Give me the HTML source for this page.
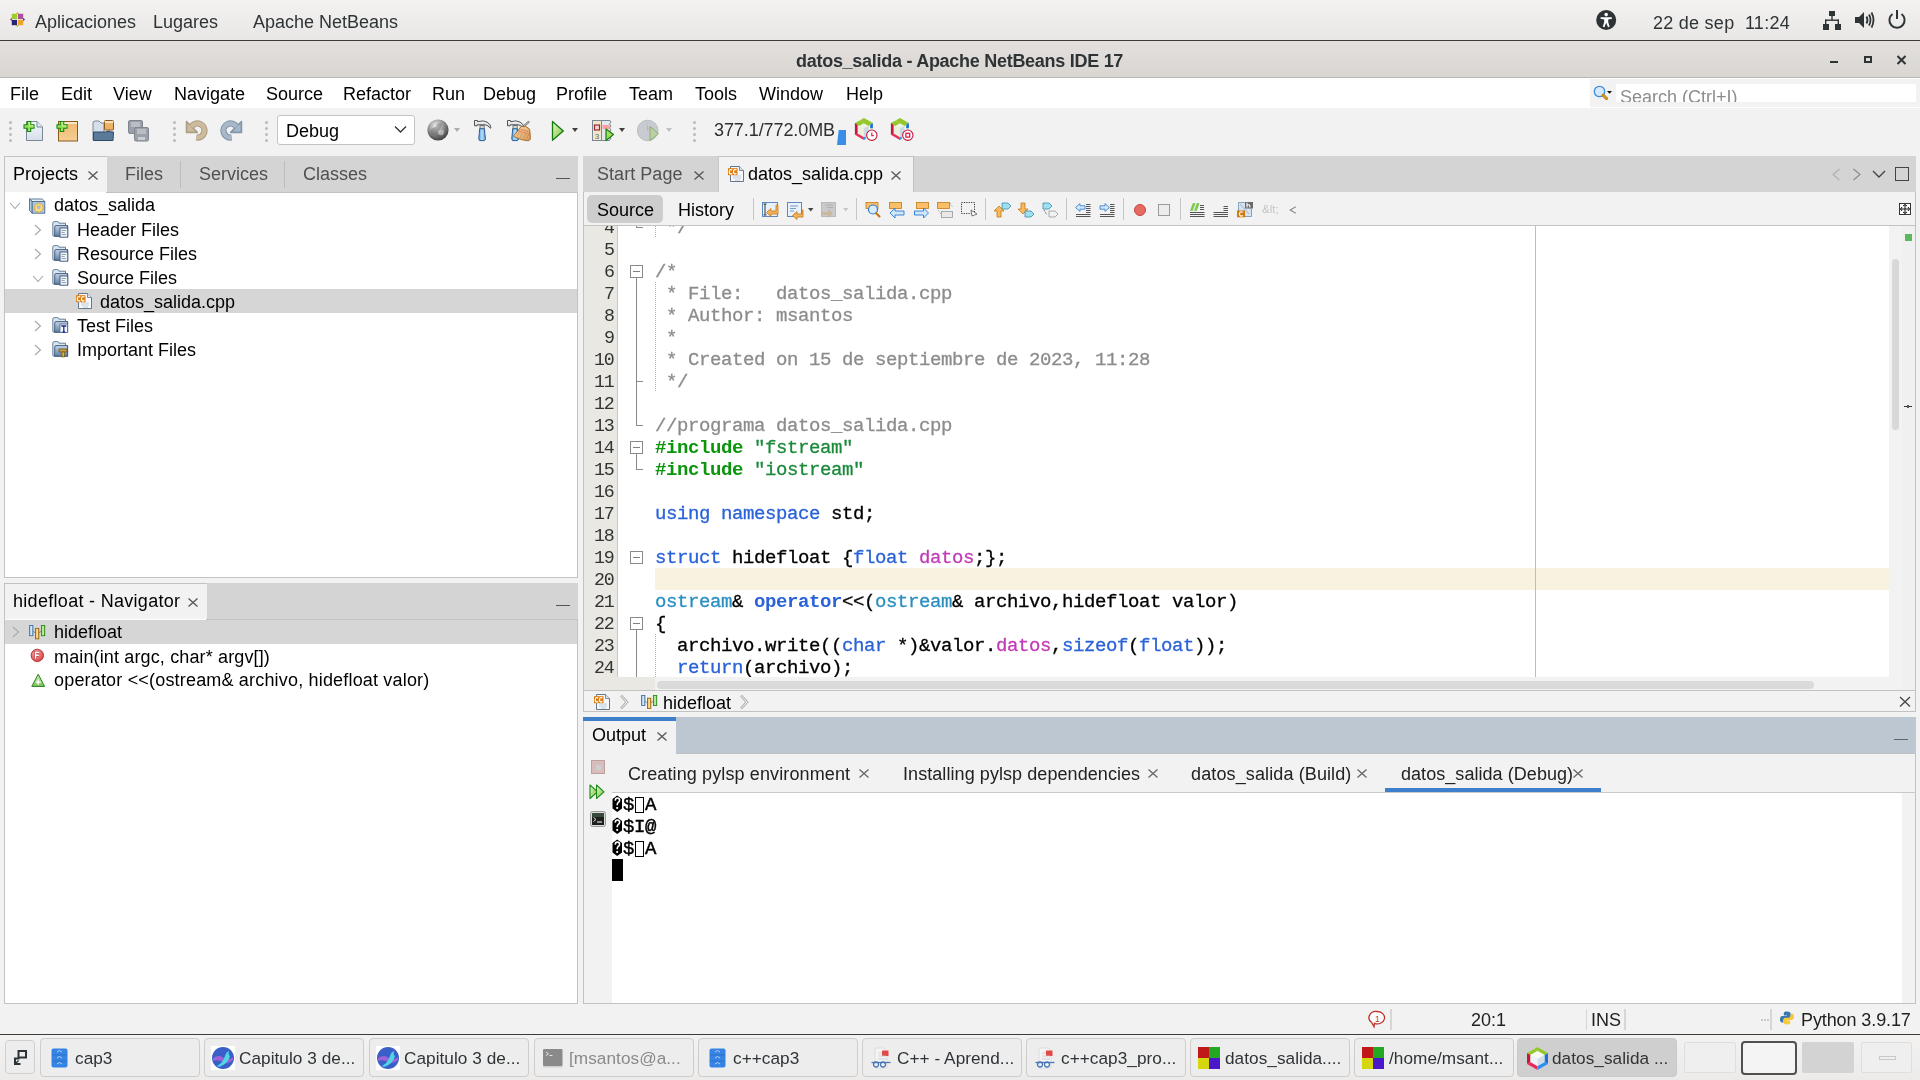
<!DOCTYPE html>
<html><head><meta charset="utf-8">
<style>
*{box-sizing:border-box;margin:0;padding:0}
html,body{width:1920px;height:1080px;overflow:hidden;background:#f2f2f2;font-family:"Liberation Sans",sans-serif;font-size:18px;color:#000}
.a{position:absolute}
.t{position:absolute;white-space:pre;will-change:transform}
svg.a{overflow:visible}
</style></head><body>
<div class="a" style="left:0px;top:0px;width:1920px;height:40px;background:linear-gradient(#f3f2f1,#e9e7e5)"></div>
<div class="a" style="left:0px;top:40px;width:1920px;height:1px;background:#3c3c3c"></div>
<svg class="a" style="left:9.5px;top:12.3px;" width="17" height="17" viewBox="0 0 17 17"><g transform="rotate(45 9.5 9.5)">
<rect x="3" y="3" width="13" height="13" fill="#fff" opacity="0"/>
</g>
<g transform="scale(0.88)"><polygon points="8.5,0 10.5,2 6.5,2" fill="#efa429"/>
<polygon points="17,8.5 15,10.5 15,6.5" fill="#262577"/>
<polygon points="8.5,17 6.5,15 10.5,15" fill="#9ccd2a"/>
<polygon points="0,8.5 2,6.5 2,10.5" fill="#932279"/>
<rect x="2" y="2" width="6" height="6" fill="#9ccd2a"/>
<rect x="9" y="2" width="6" height="6" fill="#b0509a"/>
<rect x="2" y="9" width="6" height="6" fill="#262577"/>
<rect x="9" y="9" width="6" height="6" fill="#efa429"/></g>
</svg>
<div class="t" style="left:35px;top:12.26px;font-size:18px;line-height:20px;color:#2e3436;font-family:'Liberation Sans',sans-serif;">Aplicaciones</div>
<div class="t" style="left:153px;top:12.26px;font-size:18px;line-height:20px;color:#2e3436;font-family:'Liberation Sans',sans-serif;">Lugares</div>
<div class="t" style="left:253px;top:12.26px;font-size:18px;line-height:20px;color:#2e3436;font-family:'Liberation Sans',sans-serif;">Apache NetBeans</div>
<svg class="a" style="left:1596px;top:10px;" width="21" height="21" viewBox="0 0 21 21"><circle cx="10.2" cy="10" r="10" fill="#2e3436"/>
<circle cx="10.2" cy="4.6" r="1.8" fill="#fff"/>
<path d="M4.5 7.2 L15.9 7.2 L15.9 8.8 L12.2 9.4 L12.2 12 L13.6 16.8 L12 17.2 L10.2 12.8 L8.4 17.2 L6.8 16.8 L8.2 12 L8.2 9.4 L4.5 8.8 Z" fill="#fff"/></svg>
<div class="t" style="left:1653px;top:12.56px;font-size:18px;line-height:20px;color:#2e3436;font-family:'Liberation Sans',sans-serif;letter-spacing:0.26px;">22 de sep  11:24</div>
<svg class="a" style="left:1822px;top:10px;" width="21" height="21" viewBox="0 0 21 21"><rect x="7" y="1" width="6" height="5" fill="#2e3436"/>
<rect x="9.3" y="6" width="1.4" height="4" fill="#2e3436"/>
<rect x="3" y="9.5" width="14" height="1.4" fill="#2e3436"/>
<rect x="3" y="9.5" width="1.4" height="5" fill="#2e3436"/>
<rect x="15.6" y="9.5" width="1.4" height="5" fill="#2e3436"/>
<rect x="1" y="14" width="6" height="6" fill="#2e3436"/>
<rect x="13" y="14" width="6" height="6" fill="#2e3436"/></svg>
<svg class="a" style="left:1854px;top:10px;" width="21" height="21" viewBox="0 0 21 21"><path d="M1 7 L5 7 L10 2 L10 18 L5 13 L1 13 Z" fill="#2e3436"/>
<path d="M12.5 6.5 Q14.5 10 12.5 13.5" stroke="#2e3436" stroke-width="1.8" fill="none"/>
<path d="M15 4.5 Q18 10 15 15.5" stroke="#2e3436" stroke-width="1.8" fill="none"/>
<path d="M17.5 2.5 Q21.5 10 17.5 17.5" stroke="#2e3436" stroke-width="1.8" fill="none"/></svg>
<svg class="a" style="left:1887px;top:9px;" width="21" height="21" viewBox="0 0 21 21"><path d="M5.5 5 A7.6 7.6 0 1 0 14.5 5" stroke="#2e3436" stroke-width="2" fill="none"/>
<rect x="9" y="1" width="2" height="9" fill="#2e3436"/></svg>
<div class="a" style="left:0px;top:41px;width:1920px;height:37px;background:linear-gradient(#e3e0dd,#d9d6d2)"></div>
<div class="a" style="left:0px;top:77px;width:1920px;height:1px;background:#bcb8b3"></div>
<div class="t" style="left:796px;top:50.96px;font-size:18px;line-height:20px;color:#2e3436;font-family:'Liberation Sans',sans-serif;font-weight:bold;letter-spacing:-0.28px;">datos_salida - Apache NetBeans IDE 17</div>
<div class="a" style="left:1830px;top:61px;width:8px;height:2px;background:#2e3436"></div>
<div class="a" style="left:1864px;top:56px;width:7.5px;height:6.5px;border:2px solid #2e3436"></div>
<svg class="a" style="left:1896px;top:55px;" width="11" height="10" viewBox="0 0 11 10"><path d="M1.5 1 L9.5 9 M9.5 1 L1.5 9" stroke="#2e3436" stroke-width="2"/></svg>
<div class="a" style="left:0px;top:78px;width:1920px;height:30px;background:#fff"></div>
<div class="t" style="left:10px;top:84.26px;font-size:18px;line-height:20px;color:#000;font-family:'Liberation Sans',sans-serif;">File</div>
<div class="t" style="left:61px;top:84.26px;font-size:18px;line-height:20px;color:#000;font-family:'Liberation Sans',sans-serif;">Edit</div>
<div class="t" style="left:113px;top:84.26px;font-size:18px;line-height:20px;color:#000;font-family:'Liberation Sans',sans-serif;">View</div>
<div class="t" style="left:173.5px;top:84.26px;font-size:18px;line-height:20px;color:#000;font-family:'Liberation Sans',sans-serif;">Navigate</div>
<div class="t" style="left:266px;top:84.26px;font-size:18px;line-height:20px;color:#000;font-family:'Liberation Sans',sans-serif;">Source</div>
<div class="t" style="left:343px;top:84.26px;font-size:18px;line-height:20px;color:#000;font-family:'Liberation Sans',sans-serif;">Refactor</div>
<div class="t" style="left:432px;top:84.26px;font-size:18px;line-height:20px;color:#000;font-family:'Liberation Sans',sans-serif;">Run</div>
<div class="t" style="left:483px;top:84.26px;font-size:18px;line-height:20px;color:#000;font-family:'Liberation Sans',sans-serif;">Debug</div>
<div class="t" style="left:556px;top:84.26px;font-size:18px;line-height:20px;color:#000;font-family:'Liberation Sans',sans-serif;">Profile</div>
<div class="t" style="left:629px;top:84.26px;font-size:18px;line-height:20px;color:#000;font-family:'Liberation Sans',sans-serif;">Team</div>
<div class="t" style="left:695px;top:84.26px;font-size:18px;line-height:20px;color:#000;font-family:'Liberation Sans',sans-serif;">Tools</div>
<div class="t" style="left:758.5px;top:84.26px;font-size:18px;line-height:20px;color:#000;font-family:'Liberation Sans',sans-serif;">Window</div>
<div class="t" style="left:846px;top:84.26px;font-size:18px;line-height:20px;color:#000;font-family:'Liberation Sans',sans-serif;">Help</div>
<div class="a" style="left:1590px;top:79px;width:330px;height:27.7px;background:#f2f2f2"></div>
<div class="a" style="left:1616px;top:84px;width:300px;height:18px;background:#fff"></div>
<svg class="a" style="left:1592px;top:84px;" width="24" height="18" viewBox="0 0 24 18"><circle cx="7.5" cy="7.5" r="5.2" stroke="#3b8fd6" stroke-width="1.3" fill="#d4e9fb"/>
<path d="M11.2 11.2 L14.5 14.5" stroke="#9a6408" stroke-width="3" stroke-linecap="round"/><path d="M11.2 11.2 L14.5 14.5" stroke="#e0a020" stroke-width="1.8" stroke-linecap="round"/>
<polygon points="15,7 20,7 17.5,9.8" fill="#111"/></svg>
<div class="a" style="left:1616px;top:84px;width:300px;height:18px;overflow:hidden">
<div class="t" style="left:4px;top:2.76px;font-size:18px;line-height:20px;color:#8d8d8d;font-family:'Liberation Sans',sans-serif;">Search (Ctrl+I)</div>
</div>
<div class="a" style="left:0px;top:108px;width:1920px;height:48px;background:#f2f2f2"></div>
<div class="a" style="left:8.8px;top:120.5px;width:3px;height:3px;border-radius:50%;background:#b9b9b9"></div>
<div class="a" style="left:8.8px;top:126.5px;width:3px;height:3px;border-radius:50%;background:#b9b9b9"></div>
<div class="a" style="left:8.8px;top:132.5px;width:3px;height:3px;border-radius:50%;background:#b9b9b9"></div>
<div class="a" style="left:8.8px;top:138.5px;width:3px;height:3px;border-radius:50%;background:#b9b9b9"></div>
<div class="a" style="left:172.9px;top:120.5px;width:3px;height:3px;border-radius:50%;background:#b9b9b9"></div>
<div class="a" style="left:172.9px;top:126.5px;width:3px;height:3px;border-radius:50%;background:#b9b9b9"></div>
<div class="a" style="left:172.9px;top:132.5px;width:3px;height:3px;border-radius:50%;background:#b9b9b9"></div>
<div class="a" style="left:172.9px;top:138.5px;width:3px;height:3px;border-radius:50%;background:#b9b9b9"></div>
<div class="a" style="left:264.5px;top:120.5px;width:3px;height:3px;border-radius:50%;background:#b9b9b9"></div>
<div class="a" style="left:264.5px;top:126.5px;width:3px;height:3px;border-radius:50%;background:#b9b9b9"></div>
<div class="a" style="left:264.5px;top:132.5px;width:3px;height:3px;border-radius:50%;background:#b9b9b9"></div>
<div class="a" style="left:264.5px;top:138.5px;width:3px;height:3px;border-radius:50%;background:#b9b9b9"></div>
<div class="a" style="left:692.7px;top:120.5px;width:3px;height:3px;border-radius:50%;background:#b9b9b9"></div>
<div class="a" style="left:692.7px;top:126.5px;width:3px;height:3px;border-radius:50%;background:#b9b9b9"></div>
<div class="a" style="left:692.7px;top:132.5px;width:3px;height:3px;border-radius:50%;background:#b9b9b9"></div>
<div class="a" style="left:692.7px;top:138.5px;width:3px;height:3px;border-radius:50%;background:#b9b9b9"></div>
<svg class="a" style="left:23px;top:120px;" width="21" height="22" viewBox="0 0 21 22"><defs><linearGradient id="pg" x1="0" y1="0" x2="0" y2="1"><stop offset="0" stop-color="#f4f7fb"/><stop offset="1" stop-color="#d5dfea"/></linearGradient></defs>
<path d="M3.5 1.5 L14 1.5 L19.5 7 L19.5 20.5 L3.5 20.5 Z" fill="url(#pg)" stroke="#7a8797" stroke-width="1"/>
<path d="M14 1.5 L14 7 L19.5 7" fill="#dfe6ee" stroke="#7a8797" stroke-width="1"/>
<path d="M4.3 1.5 h3.4 v3.3 h3.3 v3.4 h-3.3 v3.3 h-3.4 v-3.3 h-3.3 v-3.4 h3.3 z" fill="#9be05a" stroke="#118a0e" stroke-width="1.1"/><path d="M5.3 2.5 h1.4 v3.3 h3.3 v1.4" fill="none" stroke="#d8f7b0" stroke-width="0.8"/></svg>
<svg class="a" style="left:56px;top:120px;" width="22" height="22" viewBox="0 0 22 22"><defs><linearGradient id="og" x1="0" y1="0" x2="0" y2="1"><stop offset="0" stop-color="#f0b86e"/><stop offset="1" stop-color="#f4cf94"/></linearGradient></defs>
<rect x="2.5" y="1.5" width="19" height="19.5" fill="url(#og)" stroke="#8a5a1a" stroke-width="1"/>
<rect x="3" y="2" width="18" height="2" fill="#fbe6c8"/>
<path d="M4.3 1.5 h3.4 v3.3 h3.3 v3.4 h-3.3 v3.3 h-3.4 v-3.3 h-3.3 v-3.4 h3.3 z" fill="#9be05a" stroke="#118a0e" stroke-width="1.1"/><path d="M5.3 2.5 h1.4 v3.3 h3.3 v1.4" fill="none" stroke="#d8f7b0" stroke-width="0.8"/></svg>
<svg class="a" style="left:92px;top:119px;" width="23" height="23" viewBox="0 0 23 23"><path d="M1 4 Q1 2 3 2 L7 2 L9 4 L12 4 L12 21 L1 21 Z" fill="#d7e0ea" stroke="#7a8796" stroke-width="1"/>
<rect x="12.5" y="1.5" width="9" height="9.5" rx="1" fill="#eeb264" stroke="#8a5a1a" stroke-width="1"/>
<rect x="12.8" y="2" width="8.5" height="2" fill="#fbe3c0"/>
<rect x="16.5" y="11" width="1" height="2" fill="#5a6a7a"/>
<path d="M1.5 13 L1.5 21.5 L21 21.5 L21.5 13 L15 12.5 L13.5 13 Z" fill="#5b7a99" stroke="#2f4a66" stroke-width="1"/></svg>
<svg class="a" style="left:127px;top:119px;" width="24" height="24" viewBox="0 0 24 24"><rect x="1.5" y="1.5" width="14" height="13" rx="1.5" fill="#9aa1a8" stroke="#7f868d"/>
<rect x="4" y="3" width="9" height="5" fill="#b8bec4"/>
<rect x="7.5" y="8.5" width="14" height="13.5" rx="1.5" fill="#9aa1a8" stroke="#7f868d"/>
<rect x="10" y="10" width="9" height="5" fill="#b8bec4"/>
<rect x="11" y="18" width="7" height="3" fill="#c9ced2"/></svg>
<svg class="a" style="left:180px;top:114px;" width="80" height="32" viewBox="0 0 80 32"><g><path d="M11.44 13 A7 7 0 1 1 16.3 23.4" stroke="#ad9d84" stroke-width="6.3" fill="none"/><polygon points="6.5,7.5 6.5,18.4 17.3,18.4" fill="#ad9d84" stroke="#ad9d84" stroke-width="1.6" stroke-linejoin="round"/><path d="M11.44 13 A7 7 0 1 1 16.3 23.4" stroke="#cdbb9e" stroke-width="4.3" fill="none"/><polygon points="7.4,9.4 7.4,17.5 15.3,17.5" fill="#cdbb9e"/></g><g transform="translate(67.95 0) scale(-1 1)"><path d="M11.44 13 A7 7 0 1 1 16.3 23.4" stroke="#8197aa" stroke-width="6.3" fill="none"/><polygon points="6.5,7.5 6.5,18.4 17.3,18.4" fill="#8197aa" stroke="#8197aa" stroke-width="1.6" stroke-linejoin="round"/><path d="M11.44 13 A7 7 0 1 1 16.3 23.4" stroke="#a7b9c9" stroke-width="4.3" fill="none"/><polygon points="7.4,9.4 7.4,17.5 15.3,17.5" fill="#a7b9c9"/></g></svg>
<div class="a" style="left:276.5px;top:115px;width:138px;height:30px;background:#fff;border:1px solid #c4c4c4;border-radius:3px"></div>
<div class="t" style="left:285.7px;top:120.76px;font-size:18px;line-height:20px;color:#000;font-family:'Liberation Sans',sans-serif;">Debug</div>
<svg class="a" style="left:394px;top:125px;" width="13" height="9" viewBox="0 0 13 9"><path d="M1 1.5 L6.5 7 L12 1.5" stroke="#333" stroke-width="1.3" fill="none"/></svg>
<svg class="a" style="left:427px;top:119px;" width="23" height="23" viewBox="0 0 23 23"><defs><radialGradient id="gl" cx="0.4" cy="0.3" r="0.75"><stop offset="0" stop-color="#f0f0f0"/><stop offset="0.45" stop-color="#9a9a9a"/><stop offset="1" stop-color="#333"/></radialGradient></defs>
<circle cx="11" cy="11" r="10.6" fill="url(#gl)"/>
<path d="M13.5 4 Q16 6 13 9.5 Q11.5 11 12 14 Q14 16 17 14 Q19 12 20 15 Q18 19 14 20 Q10 19 9 16 Q6 17 4 14 Q3 11 6 9 Q9 8 10 5 Z" fill="#5a5a5a" opacity="0.35"/>
<path d="M11 12 Q13 10 16 11 Q18 13 16 16 Q13 17 11 15 Z" fill="#d8d8d8" opacity="0.55"/></svg>
<svg class="a" style="left:453.5px;top:127.5px;" width="7" height="5" viewBox="0 0 7 5"><polygon points="0,0 6,0 3,4" fill="#ababab"/></svg>
<svg class="a" style="left:473px;top:119px;" width="20" height="23" viewBox="0 0 20 23"><defs><linearGradient id="hg" x1="0" y1="0" x2="0" y2="1"><stop offset="0" stop-color="#fafafa"/><stop offset="1" stop-color="#c4c6c8"/></linearGradient>
<linearGradient id="hb" x1="0" y1="0" x2="1" y2="0"><stop offset="0" stop-color="#5aa6e6"/><stop offset="0.5" stop-color="#b8def8"/><stop offset="1" stop-color="#5aa0dc"/></linearGradient></defs>
<rect x="7" y="6.5" width="4.2" height="3.5" fill="#d4d6d8" stroke="#666" stroke-width="0.8"/>
<path d="M1.5 1.5 h3 v1.2 q6 -1.8 9.5 0.3 q3.8 2.2 4 5.8 q-0.4 0.7 -1.2 0.1 q-1.6 -2.6 -4.6 -3.1 h-8 v1 h-2.7 z" fill="url(#hg)" stroke="#505458" stroke-width="1" stroke-linejoin="round"/>
<path d="M6.6 9.8 h4.9 q0.2 4.5 0.9 9.5 q0 2.2 -1 2.3 h-4.6 q-1 -0.1 -1 -2.3 q0.6 -5 0.8 -9.5z" fill="url(#hb)" stroke="#2b5c92" stroke-width="1"/></svg>
<svg class="a" style="left:506px;top:119px;" width="25" height="24" viewBox="0 0 25 24"><defs><linearGradient id="hg" x1="0" y1="0" x2="0" y2="1"><stop offset="0" stop-color="#fafafa"/><stop offset="1" stop-color="#c4c6c8"/></linearGradient>
<linearGradient id="hb" x1="0" y1="0" x2="1" y2="0"><stop offset="0" stop-color="#5aa6e6"/><stop offset="0.5" stop-color="#b8def8"/><stop offset="1" stop-color="#5aa0dc"/></linearGradient></defs>
<rect x="7" y="6.5" width="4.2" height="3.5" fill="#d4d6d8" stroke="#666" stroke-width="0.8"/>
<path d="M1.5 1.5 h3 v1.2 q6 -1.8 9.5 0.3 q3.8 2.2 4 5.8 q-0.4 0.7 -1.2 0.1 q-1.6 -2.6 -4.6 -3.1 h-8 v1 h-2.7 z" fill="url(#hg)" stroke="#505458" stroke-width="1" stroke-linejoin="round"/>
<path d="M6.6 9.8 h4.9 q0.2 4.5 0.9 9.5 q0 2.2 -1 2.3 h-4.6 q-1 -0.1 -1 -2.3 q0.6 -5 0.8 -9.5z" fill="url(#hb)" stroke="#2b5c92" stroke-width="1"/><defs><linearGradient id="br" x1="0" y1="0" x2="1" y2="1"><stop offset="0" stop-color="#f6d8a8"/><stop offset="1" stop-color="#d89a58"/></linearGradient></defs>
<path d="M16 9 L22.5 3" stroke="#6a6e72" stroke-width="2.2" stroke-linecap="round"/><path d="M16 9 L22.5 3" stroke="#e8e8e8" stroke-width="0.8" stroke-linecap="round"/>
<path d="M15 7.5 q5 -1.5 8.5 2.5 q1 5 0.8 10 q-0.6 1.8 -2.5 1.8 q-6.5 -0.5 -13.5 -4 q-1 -1.2 0.3 -2.3 q3 -2.5 6.4 -8z" fill="url(#br)" stroke="#9a6428" stroke-width="0.9"/>
<path d="M13.5 11 q5 -0.5 10 3 M12.5 13 q5.5 -0.3 11 3.2" stroke="#d2483a" stroke-width="0.8" fill="none" stroke-dasharray="1.2 0.8"/>
<path d="M11 17 l2 -3 M14 18.5 l2 -4 M17 19.5 l2.5 -4.5 M20 20.5 l2.5 -5" stroke="#b88040" stroke-width="0.5"/></svg>
<svg class="a" style="left:551px;top:120px;" width="14" height="22" viewBox="0 0 14 22"><defs><linearGradient id="rg" x1="0" y1="0" x2="1" y2="1"><stop offset="0" stop-color="#e6f7c4"/><stop offset="1" stop-color="#7cc23b"/></linearGradient></defs>
<path d="M1.5 1.5 L12.3 11 L1.5 20.3 Z" fill="url(#rg)" stroke="#137b13" stroke-width="1.3" stroke-linejoin="round"/></svg>
<svg class="a" style="left:572px;top:128px;" width="7" height="5" viewBox="0 0 7 5"><polygon points="0,0 6,0 3,4" fill="#404040"/></svg>
<svg class="a" style="left:591px;top:119px;" width="25" height="24" viewBox="0 0 25 24"><rect x="1.5" y="1.5" width="9" height="20" fill="#f2e7c6" stroke="#7a8797"/>
<path d="M10.5 1.5 L19 1.5 L20 3 L18.5 5 L20 7 L18.5 9 L20 11 L18.5 13 L20 15 L18.5 17 L20 19 L18.5 21.5 L10.5 21.5 Z" fill="#e3e8ee" stroke="#7a8797"/>
<rect x="3.5" y="6" width="5" height="5" fill="#f6d4d4" stroke="#9b2d2d" stroke-width="1.2"/>
<text x="3.8" y="19.5" font-size="8" font-family="Liberation Sans" fill="#5a6a7a">3</text>
<rect x="11.5" y="6" width="7" height="4" fill="#ff9e9e"/>
<path d="M15 10 L22.5 15.5 L15 21.5 Z" fill="#a4dd5a" stroke="#137b13" stroke-width="1.2" stroke-linejoin="round"/></svg>
<svg class="a" style="left:619px;top:128px;" width="7" height="5" viewBox="0 0 7 5"><polygon points="0,0 6,0 3,4" fill="#404040"/></svg>
<svg class="a" style="left:637px;top:119px;" width="24" height="24" viewBox="0 0 24 24"><circle cx="10.7" cy="11.5" r="10.3" fill="#c8ccd0" stroke="#b0b4b8" stroke-width="0.8"/>
<path d="M10.7 2.5 L11.4 11.5 L10 11.5 Z" fill="#d9a889"/>
<path d="M13 7.5 L21.5 14.5 L13 21.5 Z" fill="#bcd0a6" stroke="#8aab72" stroke-width="1" stroke-linejoin="round"/></svg>
<svg class="a" style="left:666px;top:128px;" width="7" height="5" viewBox="0 0 7 5"><polygon points="0,0 6,0 3,4" fill="#c0c0c0"/></svg>
<div class="t" style="left:713.8px;top:120.46px;font-size:18px;line-height:20px;color:#303030;font-family:'Liberation Sans',sans-serif;letter-spacing:-0.08px;">377.1/772.0MB</div>
<svg class="a" style="left:837px;top:129px;" width="10" height="17" viewBox="0 0 10 17"><polygon points="1.7,1 9,1 9,16 0,16" fill="#3a8ee6"/></svg>
<svg class="a" style="left:854px;top:117px;" width="25" height="27" viewBox="0 0 25 27"><g transform="scale(0.9 0.94)"><polygon points="11,1 21,6.5 21,19 11,24.5 1,19 1,6.5" fill="#e9f0dc"/>
<polygon points="11,1 21,6.5 16,9.5 6,4" fill="#94c72a"/>
<polygon points="1,6.5 6,4 11,7 6,9.5" fill="#94c72a"/>
<polygon points="1,6.5 4,8.2 4,17.5 1,19" fill="#c2183a"/>
<polygon points="1,19 4,17.5 11,21.5 11,24.5" fill="#ea2a5a"/>
<polygon points="21,6.5 18,8.2 18,12 21,12" fill="#1d6fd6"/>
<polygon points="11,21.5 13,20.4 13,23.4 11,24.5" fill="#2a8ff0"/>
<polygon points="6,9.5 11,7 16,9.5 11,12" fill="#eef3e4"/>
<polygon points="11,12 16,9.5 16,19 11,21.5" fill="#cdd8e6"/></g>
<circle cx="17.8" cy="18.2" r="5.2" fill="#fff" stroke="#c2183a" stroke-width="1.1"/><path d="M17.8 15.5 L17.8 18.6 L19.8 18.6" stroke="#e02050" stroke-width="1.2" fill="none"/></svg>
<svg class="a" style="left:890px;top:117px;" width="25" height="27" viewBox="0 0 25 27"><g transform="scale(0.9 0.94)"><polygon points="11,1 21,6.5 21,19 11,24.5 1,19 1,6.5" fill="#e9f0dc"/>
<polygon points="11,1 21,6.5 16,9.5 6,4" fill="#94c72a"/>
<polygon points="1,6.5 6,4 11,7 6,9.5" fill="#94c72a"/>
<polygon points="1,6.5 4,8.2 4,17.5 1,19" fill="#c2183a"/>
<polygon points="1,19 4,17.5 11,21.5 11,24.5" fill="#ea2a5a"/>
<polygon points="21,6.5 18,8.2 18,12 21,12" fill="#1d6fd6"/>
<polygon points="11,21.5 13,20.4 13,23.4 11,24.5" fill="#2a8ff0"/>
<polygon points="6,9.5 11,7 16,9.5 11,12" fill="#eef3e4"/>
<polygon points="11,12 16,9.5 16,19 11,21.5" fill="#cdd8e6"/></g>
<circle cx="17.8" cy="18.2" r="5.2" fill="#fff" stroke="#c2183a" stroke-width="1.1"/><rect x="15.9" y="16.3" width="3.8" height="3.8" fill="none" stroke="#e02050" stroke-width="1.3"/></svg>
<div class="a" style="left:4px;top:156px;width:574px;height:37px;background:#d4d4d4;border-left:1px solid #c2c2c2"></div>
<div class="a" style="left:4px;top:156px;width:103px;height:37px;background:#f2f2f2;border-left:1px solid #c2c2c2;border-top:1px solid #c2c2c2"></div>
<div class="a" style="left:4px;top:192px;width:574px;height:386px;background:#fff;border:1px solid #c2c2c2;border-top:none"></div>
<div class="a" style="left:106px;top:192px;width:472px;height:1px;background:#c2c2c2"></div>
<div class="t" style="left:12.5px;top:164.26px;font-size:18px;line-height:20px;color:#000;font-family:'Liberation Sans',sans-serif;">Projects</div>
<svg class="a" style="left:88px;top:171px;" width="11" height="10" viewBox="0 0 11 10"><path d="M0.5 0.5 L9.5 8.5 M9.5 0.5 L0.5 8.5" stroke="#555" stroke-width="1.3"/></svg>
<div class="t" style="left:125px;top:164.26px;font-size:18px;line-height:20px;color:#505050;font-family:'Liberation Sans',sans-serif;">Files</div>
<div class="a" style="left:180px;top:161px;width:1px;height:27px;background:#bcbcbc"></div>
<div class="t" style="left:198.5px;top:164.26px;font-size:18px;line-height:20px;color:#505050;font-family:'Liberation Sans',sans-serif;">Services</div>
<div class="a" style="left:284px;top:161px;width:1px;height:27px;background:#bcbcbc"></div>
<div class="t" style="left:302.8px;top:164.26px;font-size:18px;line-height:20px;color:#505050;font-family:'Liberation Sans',sans-serif;">Classes</div>
<div class="a" style="left:556px;top:178.2px;width:14px;height:1.2px;background:#555"></div>
<div class="a" style="left:5px;top:289px;width:572px;height:24px;background:#d6d6d6"></div>
<svg class="a" style="left:9px;top:202px;" width="12" height="8" viewBox="0 0 12 8"><path d="M1 1 L6 6.5 L11 1" stroke="#a4a4a4" stroke-width="1.05" fill="none"/></svg>
<svg class="a" style="left:29px;top:197.8px;" width="17" height="17" viewBox="0 0 17 17"><polygon points="0.5,1 13.2,1 15.8,3.5 3.2,3.5" fill="#e4eef6" stroke="#4e6e8e" stroke-width="0.9" stroke-linejoin="round"/>
<polygon points="0.5,1 3.2,3.5 3.2,15.2 0.5,12.6" fill="#b4cde2" stroke="#4e6e8e" stroke-width="0.9" stroke-linejoin="round"/>
<rect x="3.2" y="3.5" width="12.6" height="11.7" fill="#a9c8e6" stroke="#4e6e8e" stroke-width="0.9"/>
<g transform="translate(9.7 9.2) scale(0.82)"><path d="M-1.2 -5 h2.4 l0.5 1.6 l1.5 -0.8 l1.7 1.7 l-0.8 1.5 l1.6 0.5 v2.4 l-1.6 0.5 l0.8 1.5 l-1.7 1.7 l-1.5 -0.8 l-0.5 1.6 h-2.4 l-0.5 -1.6 l-1.5 0.8 l-1.7 -1.7 l0.8 -1.5 l-1.6 -0.5 v-2.4 l1.6 -0.5 l-0.8 -1.5 l1.7 -1.7 l1.5 0.8 z" fill="#f3dc8c" stroke="#d89a28" stroke-width="0.8"/>
<circle r="1.8" fill="#a9c8e6" stroke="#d89a28" stroke-width="0.6"/></g></svg>
<div class="t" style="left:53.75px;top:195.26px;font-size:18px;line-height:20px;color:#000;font-family:'Liberation Sans',sans-serif;">datos_salida</div>
<svg class="a" style="left:34px;top:223.5px;" width="8" height="12" viewBox="0 0 8 12"><path d="M1 1 L6.5 6 L1 11" stroke="#a4a4a4" stroke-width="1.05" fill="none"/></svg>
<svg class="a" style="left:52px;top:220.5px;" width="17" height="17" viewBox="0 0 17 17"><defs><linearGradient id="fdg" x1="0" y1="0" x2="0" y2="1"><stop offset="0" stop-color="#c4d6e8"/><stop offset="1" stop-color="#5c7ea2"/></linearGradient></defs>
<path d="M0.8 2.2 Q0.8 0.6 2.4 0.6 H5.6 Q6.8 0.6 7 2.2 H13.5 V4.5 L15.6 4.6 V15.2 H1.8 Q0.8 15.2 0.8 14 Z" fill="#dbe5ef" stroke="#56708e" stroke-width="0.9"/>
<path d="M2.6 15.2 L2.8 5.8 Q2.8 4.6 4 4.6 H15.6 V15.2 Z" fill="url(#fdg)" stroke="#3a5676" stroke-width="0.9"/><rect x="8" y="7" width="7.8" height="9.2" fill="#eef3f8" stroke="#3a5676" stroke-width="0.9"/><path d="M9.5 9.5 h4.6 M9.5 11.5 h3.2 M9.5 13.5 h4.6" stroke="#8aa0b6" stroke-width="0.9"/></svg>
<div class="t" style="left:76.5px;top:219.96px;font-size:18px;line-height:20px;color:#000;font-family:'Liberation Sans',sans-serif;">Header Files</div>
<svg class="a" style="left:34px;top:247.5px;" width="8" height="12" viewBox="0 0 8 12"><path d="M1 1 L6.5 6 L1 11" stroke="#a4a4a4" stroke-width="1.05" fill="none"/></svg>
<svg class="a" style="left:52px;top:244.5px;" width="17" height="17" viewBox="0 0 17 17"><defs><linearGradient id="fdg" x1="0" y1="0" x2="0" y2="1"><stop offset="0" stop-color="#c4d6e8"/><stop offset="1" stop-color="#5c7ea2"/></linearGradient></defs>
<path d="M0.8 2.2 Q0.8 0.6 2.4 0.6 H5.6 Q6.8 0.6 7 2.2 H13.5 V4.5 L15.6 4.6 V15.2 H1.8 Q0.8 15.2 0.8 14 Z" fill="#dbe5ef" stroke="#56708e" stroke-width="0.9"/>
<path d="M2.6 15.2 L2.8 5.8 Q2.8 4.6 4 4.6 H15.6 V15.2 Z" fill="url(#fdg)" stroke="#3a5676" stroke-width="0.9"/><rect x="8" y="7" width="7.8" height="9.2" fill="#eef3f8" stroke="#3a5676" stroke-width="0.9"/><path d="M9.5 9.5 h4.6 M9.5 11.5 h3.2 M9.5 13.5 h4.6" stroke="#8aa0b6" stroke-width="0.9"/></svg>
<div class="t" style="left:76.5px;top:243.96px;font-size:18px;line-height:20px;color:#000;font-family:'Liberation Sans',sans-serif;">Resource Files</div>
<svg class="a" style="left:32px;top:274.5px;" width="12" height="8" viewBox="0 0 12 8"><path d="M1 1 L6 6.5 L11 1" stroke="#a4a4a4" stroke-width="1.05" fill="none"/></svg>
<svg class="a" style="left:52px;top:268.5px;" width="17" height="17" viewBox="0 0 17 17"><defs><linearGradient id="fdg" x1="0" y1="0" x2="0" y2="1"><stop offset="0" stop-color="#c4d6e8"/><stop offset="1" stop-color="#5c7ea2"/></linearGradient></defs>
<path d="M0.8 2.2 Q0.8 0.6 2.4 0.6 H5.6 Q6.8 0.6 7 2.2 H13.5 V4.5 L15.6 4.6 V15.2 H1.8 Q0.8 15.2 0.8 14 Z" fill="#dbe5ef" stroke="#56708e" stroke-width="0.9"/>
<path d="M2.6 15.2 L2.8 5.8 Q2.8 4.6 4 4.6 H15.6 V15.2 Z" fill="url(#fdg)" stroke="#3a5676" stroke-width="0.9"/><rect x="8" y="7" width="7.8" height="9.2" fill="#eef3f8" stroke="#3a5676" stroke-width="0.9"/><path d="M9.5 9.5 h4.6 M9.5 11.5 h3.2 M9.5 13.5 h4.6" stroke="#8aa0b6" stroke-width="0.9"/></svg>
<div class="t" style="left:76.5px;top:267.96px;font-size:18px;line-height:20px;color:#000;font-family:'Liberation Sans',sans-serif;">Source Files</div>
<svg class="a" style="left:76px;top:293px;" width="17" height="17" viewBox="0 0 17 17"><path d="M2.5 0.5 L11.5 0.5 L15.5 4.5 L15.5 15.5 L2.5 15.5 Z" fill="#f6f8fb" stroke="#64768a" stroke-width="1"/>
<path d="M11.5 0.5 L11.5 4.5 L15.5 4.5" fill="#dfe6ee" stroke="#64768a" stroke-width="0.8"/>
<path d="M5 10 h8 M5 12 h8 M7 14 h5" stroke="#b4c0cc" stroke-width="0.8"/>
<rect x="0" y="2.2" width="9.5" height="7" fill="#e07d10"/>
<path d="M4.2 3.9 Q3.6 3.5 2.8 3.5 Q1.3 3.6 1.3 5.7 Q1.3 7.9 2.8 7.9 Q3.6 7.9 4.2 7.5 M8.4 3.9 Q7.8 3.5 7 3.5 Q5.5 3.6 5.5 5.7 Q5.5 7.9 7 7.9 Q7.8 7.9 8.4 7.5" stroke="#fff" stroke-width="1.2" fill="none"/></svg>
<div class="t" style="left:99.5px;top:291.96px;font-size:18px;line-height:20px;color:#000;font-family:'Liberation Sans',sans-serif;">datos_salida.cpp</div>
<svg class="a" style="left:34px;top:319.5px;" width="8" height="12" viewBox="0 0 8 12"><path d="M1 1 L6.5 6 L1 11" stroke="#a4a4a4" stroke-width="1.05" fill="none"/></svg>
<svg class="a" style="left:52px;top:316.5px;" width="17" height="17" viewBox="0 0 17 17"><defs><linearGradient id="fdg" x1="0" y1="0" x2="0" y2="1"><stop offset="0" stop-color="#c4d6e8"/><stop offset="1" stop-color="#5c7ea2"/></linearGradient></defs>
<path d="M0.8 2.2 Q0.8 0.6 2.4 0.6 H5.6 Q6.8 0.6 7 2.2 H13.5 V4.5 L15.6 4.6 V15.2 H1.8 Q0.8 15.2 0.8 14 Z" fill="#dbe5ef" stroke="#56708e" stroke-width="0.9"/>
<path d="M2.6 15.2 L2.8 5.8 Q2.8 4.6 4 4.6 H15.6 V15.2 Z" fill="url(#fdg)" stroke="#3a5676" stroke-width="0.9"/><rect x="8" y="7" width="7.5" height="8.5" fill="#f6f8fa" stroke="#5b7290" stroke-width="0.9"/><path d="M9.3 9 h5 M11.8 9 v6 M10.5 15 h2.6" stroke="#1a2a9a" stroke-width="1.3"/></svg>
<div class="t" style="left:76.5px;top:315.96px;font-size:18px;line-height:20px;color:#000;font-family:'Liberation Sans',sans-serif;">Test Files</div>
<svg class="a" style="left:34px;top:343.5px;" width="8" height="12" viewBox="0 0 8 12"><path d="M1 1 L6.5 6 L1 11" stroke="#a4a4a4" stroke-width="1.05" fill="none"/></svg>
<svg class="a" style="left:52px;top:340.5px;" width="17" height="17" viewBox="0 0 17 17"><defs><linearGradient id="fdg" x1="0" y1="0" x2="0" y2="1"><stop offset="0" stop-color="#c4d6e8"/><stop offset="1" stop-color="#5c7ea2"/></linearGradient></defs>
<path d="M0.8 2.2 Q0.8 0.6 2.4 0.6 H5.6 Q6.8 0.6 7 2.2 H13.5 V4.5 L15.6 4.6 V15.2 H1.8 Q0.8 15.2 0.8 14 Z" fill="#dbe5ef" stroke="#56708e" stroke-width="0.9"/>
<path d="M2.6 15.2 L2.8 5.8 Q2.8 4.6 4 4.6 H15.6 V15.2 Z" fill="url(#fdg)" stroke="#3a5676" stroke-width="0.9"/><path d="M7 8 h8 v3 h-8 z" fill="#c8a24a" stroke="#6a5018" stroke-width="0.8"/><rect x="10" y="11" width="2.5" height="5" fill="#e0b030" stroke="#6a5018" stroke-width="0.6"/></svg>
<div class="t" style="left:76.5px;top:339.96px;font-size:18px;line-height:20px;color:#000;font-family:'Liberation Sans',sans-serif;">Important Files</div>
<div class="a" style="left:4px;top:583px;width:574px;height:37px;background:#d4d4d4;border-left:1px solid #c2c2c2"></div>
<div class="a" style="left:4px;top:583px;width:203px;height:37px;background:#f2f2f2;border-left:1px solid #c2c2c2;border-top:1px solid #c2c2c2"></div>
<div class="a" style="left:4px;top:619px;width:574px;height:385px;background:#fff;border:1px solid #c2c2c2;border-top:none"></div>
<div class="a" style="left:206px;top:619px;width:372px;height:1px;background:#c2c2c2"></div>
<div class="t" style="left:12.5px;top:590.76px;font-size:18px;line-height:20px;color:#000;font-family:'Liberation Sans',sans-serif;letter-spacing:0.3px;">hidefloat - Navigator</div>
<svg class="a" style="left:188px;top:598px;" width="11" height="10" viewBox="0 0 11 10"><path d="M0.5 0.5 L9.5 8.5 M9.5 0.5 L0.5 8.5" stroke="#555" stroke-width="1.3"/></svg>
<div class="a" style="left:556px;top:604.9px;width:14px;height:1.2px;background:#555"></div>
<div class="a" style="left:5px;top:620px;width:572px;height:24px;background:#d6d6d6"></div>
<svg class="a" style="left:12px;top:626px;" width="8" height="12" viewBox="0 0 8 12"><path d="M1 1 L6.5 6 L1 11" stroke="#a8a8a8" stroke-width="1.05" fill="none"/></svg>
<svg class="a" style="left:29px;top:625px;" width="17" height="16" viewBox="0 0 17 16"><defs><linearGradient id="sb1" x1="0" x2="1"><stop offset="0" stop-color="#8cb8e0"/><stop offset="0.5" stop-color="#e4f0fa"/><stop offset="1" stop-color="#8cb8e0"/></linearGradient>
<linearGradient id="sb2" x1="0" x2="1"><stop offset="0" stop-color="#e8a830"/><stop offset="0.5" stop-color="#fde6a8"/><stop offset="1" stop-color="#e8a830"/></linearGradient>
<linearGradient id="sb3" x1="0" x2="1"><stop offset="0" stop-color="#6ac040"/><stop offset="0.5" stop-color="#d8f6b8"/><stop offset="1" stop-color="#6ac040"/></linearGradient></defs>
<path d="M3.5 6 L6.5 8 M9.5 8 L12.5 6" stroke="#6a7a8a" stroke-width="0.8"/>
<rect x="0.6" y="0.5" width="3.3" height="10.2" fill="url(#sb1)" stroke="#4a72a0" stroke-width="0.9"/>
<rect x="6.5" y="3.4" width="3.3" height="10.4" fill="url(#sb2)" stroke="#9a6010" stroke-width="0.9"/>
<rect x="12.4" y="0.5" width="3.3" height="10.2" fill="url(#sb3)" stroke="#2a8a1a" stroke-width="0.9"/></svg>
<div class="t" style="left:53.75px;top:622.26px;font-size:18px;line-height:20px;color:#000;font-family:'Liberation Sans',sans-serif;">hidefloat</div>
<svg class="a" style="left:30px;top:648px;" width="15" height="15" viewBox="0 0 15 15"><defs><radialGradient id="rf" cx="0.4" cy="0.35" r="0.7"><stop offset="0" stop-color="#ffb0b0"/><stop offset="1" stop-color="#d83a3a"/></radialGradient></defs>
<circle cx="7.3" cy="7.4" r="6.2" fill="url(#rf)" stroke="#a83030" stroke-width="0.9"/>
<path d="M5.6 10.8 V4.2 h3.8 M5.6 7.3 h3.2" stroke="#a83030" stroke-width="2.6" fill="none"/>
<path d="M5.6 10.8 V4.2 h3.8 M5.6 7.3 h3.2" stroke="#fff" stroke-width="1.5" fill="none"/></svg>
<div class="t" style="left:53.75px;top:646.51px;font-size:18px;line-height:20px;color:#000;font-family:'Liberation Sans',sans-serif;letter-spacing:0.14px;">main(int argc, char* argv[])</div>
<svg class="a" style="left:31px;top:673px;" width="15" height="15" viewBox="0 0 15 15"><defs><linearGradient id="tg" x1="0" y1="0" x2="0" y2="1"><stop offset="0" stop-color="#c8ecb0"/><stop offset="1" stop-color="#7cc45a"/></linearGradient></defs>
<polygon points="7.2,1.2 13.6,13.4 0.8,13.4" fill="url(#tg)" stroke="#2e7e22" stroke-width="1" stroke-linejoin="round"/>
<path d="M7.2 6.5 v5.2 M4.6 9.1 h5.2" stroke="#fff" stroke-width="1.3"/></svg>
<div class="t" style="left:53.75px;top:670.26px;font-size:18px;line-height:20px;color:#000;font-family:'Liberation Sans',sans-serif;letter-spacing:0.18px;">operator &lt;&lt;(ostream&amp; archivo, hidefloat valor)</div>
<div class="a" style="left:583px;top:156px;width:1333px;height:37px;background:#d4d4d4;border-left:1px solid #c2c2c2"></div>
<div class="a" style="left:583px;top:156px;width:136px;height:37px;background:#d4d4d4;border-right:1px solid #c8c8c8"></div>
<div class="a" style="left:719px;top:156px;width:195px;height:37px;background:#f2f2f2;border-top:1px solid #c2c2c2;border-right:1px solid #c2c2c2"></div>
<div class="t" style="left:597.4px;top:164.26px;font-size:18px;line-height:20px;color:#505050;font-family:'Liberation Sans',sans-serif;letter-spacing:0.05px;">Start Page</div>
<svg class="a" style="left:694px;top:171px;" width="11" height="10" viewBox="0 0 11 10"><path d="M0.5 0.5 L9.5 8.5 M9.5 0.5 L0.5 8.5" stroke="#555" stroke-width="1.3"/></svg>
<svg class="a" style="left:728px;top:166px;" width="17" height="17" viewBox="0 0 17 17"><path d="M2.5 0.5 L11.5 0.5 L15.5 4.5 L15.5 15.5 L2.5 15.5 Z" fill="#f6f8fb" stroke="#64768a" stroke-width="1"/>
<path d="M11.5 0.5 L11.5 4.5 L15.5 4.5" fill="#dfe6ee" stroke="#64768a" stroke-width="0.8"/>
<path d="M5 10 h8 M5 12 h8 M7 14 h5" stroke="#b4c0cc" stroke-width="0.8"/>
<rect x="0" y="2.2" width="9.5" height="7" fill="#e07d10"/>
<path d="M4.2 3.9 Q3.6 3.5 2.8 3.5 Q1.3 3.6 1.3 5.7 Q1.3 7.9 2.8 7.9 Q3.6 7.9 4.2 7.5 M8.4 3.9 Q7.8 3.5 7 3.5 Q5.5 3.6 5.5 5.7 Q5.5 7.9 7 7.9 Q7.8 7.9 8.4 7.5" stroke="#fff" stroke-width="1.2" fill="none"/></svg>
<div class="t" style="left:748px;top:164.26px;font-size:18px;line-height:20px;color:#000;font-family:'Liberation Sans',sans-serif;">datos_salida.cpp</div>
<svg class="a" style="left:891px;top:171px;" width="11" height="10" viewBox="0 0 11 10"><path d="M0.5 0.5 L9.5 8.5 M9.5 0.5 L0.5 8.5" stroke="#555" stroke-width="1.3"/></svg>
<svg class="a" style="left:1831px;top:168px;" width="10" height="13" viewBox="0 0 10 13"><path d="M8.5 1 L2 6.5 L8.5 12" stroke="#b0b0b0" stroke-width="1.2" fill="none"/></svg>
<svg class="a" style="left:1852px;top:168px;" width="10" height="13" viewBox="0 0 10 13"><path d="M1.5 1 L8 6.5 L1.5 12" stroke="#8c8c8c" stroke-width="1.2" fill="none"/></svg>
<svg class="a" style="left:1872px;top:170px;" width="14" height="9" viewBox="0 0 14 9"><path d="M1 1 L7 7 L13 1" stroke="#444" stroke-width="1.4" fill="none"/></svg>
<div class="a" style="left:1895px;top:167px;width:14px;height:14px;border:1.4px solid #444"></div>
<div class="a" style="left:583px;top:192px;width:1333px;height:34px;background:#f2f2f2;border-left:1px solid #c2c2c2;border-right:1px solid #c2c2c2;border-bottom:1px solid #c2c2c2"></div>
<div class="a" style="left:587px;top:195px;width:76px;height:28px;background:#cdcdcd;border-radius:5px"></div>
<div class="t" style="left:597.4px;top:199.76px;font-size:18px;line-height:20px;color:#000;font-family:'Liberation Sans',sans-serif;">Source</div>
<div class="t" style="left:677.7px;top:199.76px;font-size:18px;line-height:20px;color:#000;font-family:'Liberation Sans',sans-serif;">History</div>
<div class="a" style="left:753.1px;top:198px;width:1px;height:22px;background:#c6c6c6"></div>
<div class="a" style="left:856.0px;top:198px;width:1px;height:22px;background:#c6c6c6"></div>
<div class="a" style="left:985.0px;top:198px;width:1px;height:22px;background:#c6c6c6"></div>
<div class="a" style="left:1066.3px;top:198px;width:1px;height:22px;background:#c6c6c6"></div>
<div class="a" style="left:1123.0px;top:198px;width:1px;height:22px;background:#c6c6c6"></div>
<div class="a" style="left:1180.2px;top:198px;width:1px;height:22px;background:#c6c6c6"></div>
<svg class="a" style="left:762px;top:202px;" width="17" height="17" viewBox="0 0 17 17"><rect x="0.5" y="0.5" width="15" height="14" fill="#e8f2fc" stroke="#5d8ac0"/><path d="M3 2 v11 M1.5 2 h3 M1.5 13 h3" stroke="#222" stroke-width="0.9"/><path d="M14 3 v6 h-5 v-2.5 l-4.5 4 4.5 4 v-2.5 h7 v-9z" fill="#f6b25a" stroke="#c47a18" stroke-width="0.8"/></svg>
<svg class="a" style="left:787px;top:202px;" width="17" height="17" viewBox="0 0 17 17"><rect x="0.5" y="0.5" width="14" height="14" fill="#e8f2fc" stroke="#5d8ac0"/><path d="M3 4 h8 M3 6.5 h6 M3 9 h4" stroke="#7a9ac0" stroke-width="1"/><path d="M15 8 v4 h-5 v-2.5 l-4.5 4 4.5 4 v-2.5 h6 v-7z" fill="#f6b25a" stroke="#c47a18" stroke-width="0.8"/></svg>
<svg class="a" style="left:821px;top:202px;" width="17" height="17" viewBox="0 0 17 17"><rect x="0.5" y="0.5" width="14" height="14" fill="#c8cacc" stroke="#b8babc"/><path d="M4 3 h8 M6 5.5 h6" stroke="#aeb0b2" stroke-width="1"/><path d="M1 10 h6 v-3 l5 4.5 -5 4.5 v-3 h-6z" fill="#c8b8a0"/></svg>
<svg class="a" style="left:865px;top:202px;" width="17" height="17" viewBox="0 0 17 17"><rect x="1" y="0.5" width="12" height="6" fill="#fbbf68" stroke="#c47a18" stroke-width="0.8"/><circle cx="8" cy="7.5" r="4.5" fill="#d8ecfb" stroke="#2f7ad0" stroke-width="1.2"/><path d="M11 11 L14.5 14.5" stroke="#c47a18" stroke-width="2.2" stroke-linecap="round"/></svg>
<svg class="a" style="left:889px;top:202px;" width="17" height="17" viewBox="0 0 17 17"><rect x="0.5" y="0.5" width="12" height="6" fill="#fbbf68" stroke="#c47a18" stroke-width="0.8"/><path d="M1 11 l5 -5 v3 h9 v4 h-9 v3z" fill="#cfe6fb" stroke="#2f7ad0" stroke-width="0.9"/></svg>
<svg class="a" style="left:913px;top:202px;" width="17" height="17" viewBox="0 0 17 17"><rect x="3.5" y="0.5" width="12" height="6" fill="#fbbf68" stroke="#c47a18" stroke-width="0.8"/><path d="M15.5 11 l-5 -5 v3 h-9 v4 h9 v3z" fill="#cfe6fb" stroke="#2f7ad0" stroke-width="0.9"/></svg>
<svg class="a" style="left:937px;top:202px;" width="17" height="17" viewBox="0 0 17 17"><rect x="0.5" y="0.5" width="12" height="6" fill="#fbbf68" stroke="#c47a18" stroke-width="0.8"/><rect x="4.5" y="9.5" width="11" height="6" fill="#e8e8e8" stroke="#9a9a9a" stroke-width="0.8"/><path d="M13 1 l2.5 4 M1 8 l3 4" stroke="#888" stroke-width="0.8" stroke-dasharray="1 1"/></svg>
<svg class="a" style="left:961px;top:202px;" width="17" height="17" viewBox="0 0 17 17"><rect x="0.5" y="0.5" width="13" height="11" fill="none" stroke="#333" stroke-width="1" stroke-dasharray="1.2 1.2"/><path d="M10 8 L16 12 L11 14 Z" fill="#fff" stroke="#555" stroke-width="0.8"/></svg>
<svg class="a" style="left:994px;top:202px;" width="17" height="17" viewBox="0 0 17 17"><path d="M8 1 h6 l3 3 -3 3 h-6z" fill="#9fe0f0" stroke="#3a8ab0" stroke-width="0.8"/><path d="M5 4 l5 5 h-3 v6 h-4 v-6 h-3z" fill="#f9b95c" stroke="#c47a18" stroke-width="0.8"/></svg>
<svg class="a" style="left:1018px;top:202px;" width="17" height="17" viewBox="0 0 17 17"><path d="M3 1 h4 v6 h3 l-5 5 -5 -5 h3z" fill="#f9b95c" stroke="#c47a18" stroke-width="0.8"/><path d="M7 9 h6 l3 3 -3 3 h-6z" fill="#9fe0f0" stroke="#3a8ab0" stroke-width="0.8"/></svg>
<svg class="a" style="left:1042px;top:202px;" width="17" height="17" viewBox="0 0 17 17"><path d="M1 1 h6 l3 3 -3 3 h-6z" fill="#9fe0f0" stroke="#3a8ab0" stroke-width="0.8"/><path d="M7 9 h6 l3 3 -3 3 h-6z" fill="#f0f0f0" stroke="#999" stroke-width="0.8"/><path d="M2 8 l3 5" stroke="#444" stroke-width="0.9" stroke-dasharray="1 1"/></svg>
<svg class="a" style="left:808px;top:208px;" width="6" height="4" viewBox="0 0 6 4"><polygon points="0,0 5.5,0 2.75,3.5" fill="#444"/></svg>
<svg class="a" style="left:843px;top:208px;" width="6" height="4" viewBox="0 0 6 4"><polygon points="0,0 5.5,0 2.75,3.5" fill="#c8c8c8"/></svg>
<div class="a" style="left:1134px;top:203.7px;width:12px;height:12px;border-radius:50%;background:#e46a62;border:0.8px solid #c8483f"></div>
<svg class="a" style="left:1075px;top:203px;" width="16" height="15" viewBox="0 0 16 15"><path d="M0.6 4.5 L5 0.6 V2.8 H10 V6.2 H5 V8.4 Z" fill="#d4e8fb" stroke="#3a82d4" stroke-width="0.9" stroke-linejoin="round"/><path d="M11 1.5 h4.5" stroke="#555" stroke-width="1"/><path d="M11 3.5 h4.5" stroke="#555" stroke-width="1"/><path d="M11 5.5 h4.5" stroke="#555" stroke-width="1"/><path d="M11 7.5 h4.5" stroke="#555" stroke-width="1"/><path d="M11 9.5 h4.5" stroke="#555" stroke-width="1"/><path d="M1 11.5 h14.5 M1 13.5 h14.5" stroke="#555" stroke-width="1"/></svg>
<svg class="a" style="left:1099px;top:203px;" width="16" height="15" viewBox="0 0 16 15"><path d="M10.4 4.5 L6 0.6 V2.8 H1 V6.2 H6 V8.4 Z" fill="#d4e8fb" stroke="#3a82d4" stroke-width="0.9" stroke-linejoin="round"/><path d="M11 1.5 h4.5" stroke="#555" stroke-width="1"/><path d="M11 3.5 h4.5" stroke="#555" stroke-width="1"/><path d="M11 5.5 h4.5" stroke="#555" stroke-width="1"/><path d="M11 7.5 h4.5" stroke="#555" stroke-width="1"/><path d="M11 9.5 h4.5" stroke="#555" stroke-width="1"/><path d="M1 11.5 h14.5 M1 13.5 h14.5" stroke="#555" stroke-width="1"/></svg>
<svg class="a" style="left:1189px;top:203px;" width="16" height="15" viewBox="0 0 16 15"><path d="M1.5 7.5 L4 0.5 H6 L3.5 7.5 Z M5.5 7.5 L8 0.5 H10 L7.5 7.5 Z" fill="#7ed348" stroke="#5ab02a" stroke-width="0.5"/><path d="M11 2.5 h4" stroke="#555" stroke-width="1"/><path d="M11 4.5 h4" stroke="#555" stroke-width="1"/><path d="M11 6.5 h4" stroke="#555" stroke-width="1"/><path d="M1 9.5 h14.5 M1 11.5 h14.5 M1 13.5 h14.5" stroke="#555" stroke-width="1"/></svg>
<svg class="a" style="left:1213px;top:203px;" width="16" height="15" viewBox="0 0 16 15"><path d="M10.5 3.5 h4.5" stroke="#555" stroke-width="1"/><path d="M10.5 5.5 h4.5" stroke="#555" stroke-width="1"/><path d="M10.5 7.5 h4.5" stroke="#555" stroke-width="1"/><path d="M0.5 9.5 h14.5 M0.5 11.5 h14.5 M0.5 13.5 h14.5" stroke="#555" stroke-width="1"/></svg>
<svg class="a" style="left:1237px;top:202px;" width="17" height="16" viewBox="0 0 17 16"><path d="M1.5 0.5 H7 L14.5 7 V14.5 H1.5 Z" fill="#d6e4f2" stroke="#7a98b6" stroke-width="0.9"/><path d="M3 2 L12 12" stroke="#9ab4cc" stroke-width="1"/><rect x="8" y="0" width="8" height="6.5" fill="#6a6a6a"/><path d="M10 0.8 V5.6 M10 3.2 Q12.6 2.2 12.8 3.6 V5.6" stroke="#fff" stroke-width="1.1" fill="none"/><rect x="0" y="8.5" width="8" height="6.8" fill="#d47a0c"/><path d="M5.8 10.2 Q4.2 9.3 2.9 10.3 Q2 11.9 2.9 13.5 Q4.2 14.5 5.8 13.6" stroke="#fff" stroke-width="1.2" fill="none"/></svg>
<div class="a" style="left:1158px;top:204px;width:12px;height:12px;background:#ececec;border:1px solid #9a9a9a"></div>
<div class="t" style="left:1261.5px;top:203.31px;font-size:11.5px;line-height:13px;color:#c4c4c4;font-family:'Liberation Sans',sans-serif;">&amp;lt;</div>
<svg class="a" style="left:1289px;top:205px;" width="8" height="10" viewBox="0 0 8 10"><path d="M6.8 1.8 L1.2 5 L6.8 8.2" stroke="#8a8a8a" stroke-width="1.1" fill="none"/></svg>
<svg class="a" style="left:1899px;top:203px;" width="12" height="12" viewBox="0 0 12 12"><rect x="0.5" y="0.5" width="11" height="11" fill="#fff" stroke="#222" stroke-width="0.9"/><path d="M6 1.5 v9 M1.5 6 h9 M4 3 l2 -1.5 2 1.5 M4 9 l2 1.5 2 -1.5 M3 4 l-1.5 2 1.5 2 M9 4 l1.5 2 -1.5 2" stroke="#111" stroke-width="1" fill="none"/></svg>
<div class="a" style="left:583px;top:226px;width:1333px;height:465px;background:#fff;border-left:1px solid #c2c2c2;border-right:1px solid #c2c2c2"></div>
<div class="a" style="left:584px;top:226px;width:33px;height:451px;background:#e9e8e3"></div>
<div class="a" style="left:617px;top:226px;width:1px;height:451px;background:#c9c9c4"></div>
<div class="a" style="left:584px;top:677px;width:71px;height:14px;background:#e9e8e3"></div>
<div class="a" style="left:655px;top:677px;width:1234px;height:14px;background:#f2f2f2"></div>
<div class="a" style="left:657px;top:680.5px;width:1157px;height:8px;background:#dadada;border-radius:4px"></div>
<div class="a" style="left:1889px;top:226px;width:13px;height:465px;background:#f2f2f2"></div>
<div class="a" style="left:1902px;top:226px;width:13px;height:465px;background:#f0f0f0"></div>
<div class="a" style="left:1892.2px;top:259px;width:6.7px;height:171px;background:#d8d8d8;border-radius:3.5px"></div>
<div class="a" style="left:1904.7px;top:233.8px;width:7.7px;height:7px;background:#5cb85c"></div>
<div class="a" style="left:1904px;top:406px;width:8px;height:1.3px;background:#333"></div>
<div class="a" style="left:1907px;top:405px;width:2.2px;height:3px;background:#555"></div>
<div class="a" style="left:1535px;top:226px;width:1px;height:451px;background:#d6acd6"></div>
<div class="a" style="left:655px;top:568px;width:1234px;height:22px;background:#f8f2e1"></div>
<div class="a" style="left:1535px;top:568px;width:1px;height:22px;background:#d6acd6"></div>
<div class="a" style="left:584px;top:226px;width:1305px;height:451px;overflow:hidden">
<div class="t" style="left:19.799999999999955px;top:-8.37px;font-size:18.3px;line-height:21px;color:#333;font-family:'Liberation Mono',monospace;letter-spacing:-1.2816px;">4</div>
<div class="t" style="left:71.0px;top:-9.06px;font-size:19px;line-height:22px;color:#8c8c8c;font-family:'Liberation Mono',monospace;letter-spacing:-0.4017px;-webkit-text-stroke:0.3px #8c8c8c;"> */</div>
<div class="t" style="left:19.799999999999955px;top:13.63px;font-size:18.3px;line-height:21px;color:#333;font-family:'Liberation Mono',monospace;letter-spacing:-1.2816px;">5</div>
<div class="t" style="left:19.799999999999955px;top:35.63px;font-size:18.3px;line-height:21px;color:#333;font-family:'Liberation Mono',monospace;letter-spacing:-1.2816px;">6</div>
<div class="t" style="left:71.0px;top:34.94px;font-size:19px;line-height:22px;color:#8c8c8c;font-family:'Liberation Mono',monospace;letter-spacing:-0.4017px;-webkit-text-stroke:0.3px #8c8c8c;">/*</div>
<div class="t" style="left:19.799999999999955px;top:57.63px;font-size:18.3px;line-height:21px;color:#333;font-family:'Liberation Mono',monospace;letter-spacing:-1.2816px;">7</div>
<div class="t" style="left:71.0px;top:56.94px;font-size:19px;line-height:22px;color:#8c8c8c;font-family:'Liberation Mono',monospace;letter-spacing:-0.4017px;-webkit-text-stroke:0.3px #8c8c8c;"> * File:   datos_salida.cpp</div>
<div class="t" style="left:19.799999999999955px;top:79.63px;font-size:18.3px;line-height:21px;color:#333;font-family:'Liberation Mono',monospace;letter-spacing:-1.2816px;">8</div>
<div class="t" style="left:71.0px;top:78.94px;font-size:19px;line-height:22px;color:#8c8c8c;font-family:'Liberation Mono',monospace;letter-spacing:-0.4017px;-webkit-text-stroke:0.3px #8c8c8c;"> * Author: msantos</div>
<div class="t" style="left:19.799999999999955px;top:101.63px;font-size:18.3px;line-height:21px;color:#333;font-family:'Liberation Mono',monospace;letter-spacing:-1.2816px;">9</div>
<div class="t" style="left:71.0px;top:100.94px;font-size:19px;line-height:22px;color:#8c8c8c;font-family:'Liberation Mono',monospace;letter-spacing:-0.4017px;-webkit-text-stroke:0.3px #8c8c8c;"> *</div>
<div class="t" style="left:10.100000000000023px;top:123.63px;font-size:18.3px;line-height:21px;color:#333;font-family:'Liberation Mono',monospace;letter-spacing:-1.2816px;">10</div>
<div class="t" style="left:71.0px;top:122.94px;font-size:19px;line-height:22px;color:#8c8c8c;font-family:'Liberation Mono',monospace;letter-spacing:-0.4017px;-webkit-text-stroke:0.3px #8c8c8c;"> * Created on 15 de septiembre de 2023, 11:28</div>
<div class="t" style="left:10.100000000000023px;top:145.63px;font-size:18.3px;line-height:21px;color:#333;font-family:'Liberation Mono',monospace;letter-spacing:-1.2816px;">11</div>
<div class="t" style="left:71.0px;top:144.94px;font-size:19px;line-height:22px;color:#8c8c8c;font-family:'Liberation Mono',monospace;letter-spacing:-0.4017px;-webkit-text-stroke:0.3px #8c8c8c;"> */</div>
<div class="t" style="left:10.100000000000023px;top:167.63px;font-size:18.3px;line-height:21px;color:#333;font-family:'Liberation Mono',monospace;letter-spacing:-1.2816px;">12</div>
<div class="t" style="left:10.100000000000023px;top:189.63px;font-size:18.3px;line-height:21px;color:#333;font-family:'Liberation Mono',monospace;letter-spacing:-1.2816px;">13</div>
<div class="t" style="left:71.0px;top:188.94px;font-size:19px;line-height:22px;color:#8c8c8c;font-family:'Liberation Mono',monospace;letter-spacing:-0.4017px;-webkit-text-stroke:0.3px #8c8c8c;">//programa datos_salida.cpp</div>
<div class="t" style="left:10.100000000000023px;top:211.63px;font-size:18.3px;line-height:21px;color:#333;font-family:'Liberation Mono',monospace;letter-spacing:-1.2816px;">14</div>
<div class="t" style="left:71.0px;top:210.94px;font-size:19px;line-height:22px;color:#0a960a;font-family:'Liberation Mono',monospace;font-weight:bold;letter-spacing:-0.4017px;">#include</div>
<div class="t" style="left:170.0px;top:210.94px;font-size:19px;line-height:22px;color:#1a8a3a;font-family:'Liberation Mono',monospace;letter-spacing:-0.4017px;-webkit-text-stroke:0.3px #1a8a3a;">"fstream"</div>
<div class="t" style="left:10.100000000000023px;top:233.63px;font-size:18.3px;line-height:21px;color:#333;font-family:'Liberation Mono',monospace;letter-spacing:-1.2816px;">15</div>
<div class="t" style="left:71.0px;top:232.94px;font-size:19px;line-height:22px;color:#0a960a;font-family:'Liberation Mono',monospace;font-weight:bold;letter-spacing:-0.4017px;">#include</div>
<div class="t" style="left:170.0px;top:232.94px;font-size:19px;line-height:22px;color:#1a8a3a;font-family:'Liberation Mono',monospace;letter-spacing:-0.4017px;-webkit-text-stroke:0.3px #1a8a3a;">"iostream"</div>
<div class="t" style="left:10.100000000000023px;top:255.63px;font-size:18.3px;line-height:21px;color:#333;font-family:'Liberation Mono',monospace;letter-spacing:-1.2816px;">16</div>
<div class="t" style="left:10.100000000000023px;top:277.63px;font-size:18.3px;line-height:21px;color:#333;font-family:'Liberation Mono',monospace;letter-spacing:-1.2816px;">17</div>
<div class="t" style="left:71.0px;top:276.94px;font-size:19px;line-height:22px;color:#2a62d8;font-family:'Liberation Mono',monospace;letter-spacing:-0.4017px;-webkit-text-stroke:0.3px #2a62d8;">using</div>
<div class="t" style="left:137.0px;top:276.94px;font-size:19px;line-height:22px;color:#2a62d8;font-family:'Liberation Mono',monospace;letter-spacing:-0.4017px;-webkit-text-stroke:0.3px #2a62d8;">namespace</div>
<div class="t" style="left:236.0px;top:276.94px;font-size:19px;line-height:22px;color:#000;font-family:'Liberation Mono',monospace;letter-spacing:-0.4017px;-webkit-text-stroke:0.3px #000;"> std;</div>
<div class="t" style="left:10.100000000000023px;top:299.63px;font-size:18.3px;line-height:21px;color:#333;font-family:'Liberation Mono',monospace;letter-spacing:-1.2816px;">18</div>
<div class="t" style="left:10.100000000000023px;top:321.63px;font-size:18.3px;line-height:21px;color:#333;font-family:'Liberation Mono',monospace;letter-spacing:-1.2816px;">19</div>
<div class="t" style="left:71.0px;top:320.94px;font-size:19px;line-height:22px;color:#2a62d8;font-family:'Liberation Mono',monospace;letter-spacing:-0.4017px;-webkit-text-stroke:0.3px #2a62d8;">struct</div>
<div class="t" style="left:137.0px;top:320.94px;font-size:19px;line-height:22px;color:#000;font-family:'Liberation Mono',monospace;letter-spacing:-0.4017px;-webkit-text-stroke:0.3px #000;"> hidefloat {</div>
<div class="t" style="left:269.0px;top:320.94px;font-size:19px;line-height:22px;color:#2a62d8;font-family:'Liberation Mono',monospace;letter-spacing:-0.4017px;-webkit-text-stroke:0.3px #2a62d8;">float</div>
<div class="t" style="left:335.0px;top:320.94px;font-size:19px;line-height:22px;color:#c23bb5;font-family:'Liberation Mono',monospace;letter-spacing:-0.4017px;-webkit-text-stroke:0.3px #c23bb5;">datos</div>
<div class="t" style="left:390.0px;top:320.94px;font-size:19px;line-height:22px;color:#000;font-family:'Liberation Mono',monospace;letter-spacing:-0.4017px;-webkit-text-stroke:0.3px #000;">;};</div>
<div class="t" style="left:10.100000000000023px;top:343.63px;font-size:18.3px;line-height:21px;color:#333;font-family:'Liberation Mono',monospace;letter-spacing:-1.2816px;">20</div>
<div class="t" style="left:10.100000000000023px;top:365.63px;font-size:18.3px;line-height:21px;color:#333;font-family:'Liberation Mono',monospace;letter-spacing:-1.2816px;">21</div>
<div class="t" style="left:71.0px;top:364.94px;font-size:19px;line-height:22px;color:#2a8fc0;font-family:'Liberation Mono',monospace;letter-spacing:-0.4017px;-webkit-text-stroke:0.3px #2a8fc0;">ostream</div>
<div class="t" style="left:148.0px;top:364.94px;font-size:19px;line-height:22px;color:#000;font-family:'Liberation Mono',monospace;letter-spacing:-0.4017px;-webkit-text-stroke:0.3px #000;">&amp; </div>
<div class="t" style="left:170.0px;top:364.94px;font-size:19px;line-height:22px;color:#2a62d8;font-family:'Liberation Mono',monospace;font-weight:bold;letter-spacing:-0.4017px;">operator</div>
<div class="t" style="left:258.0px;top:364.94px;font-size:19px;line-height:22px;color:#000;font-family:'Liberation Mono',monospace;letter-spacing:-0.4017px;-webkit-text-stroke:0.3px #000;">&lt;&lt;(</div>
<div class="t" style="left:291.0px;top:364.94px;font-size:19px;line-height:22px;color:#2a8fc0;font-family:'Liberation Mono',monospace;letter-spacing:-0.4017px;-webkit-text-stroke:0.3px #2a8fc0;">ostream</div>
<div class="t" style="left:368.0px;top:364.94px;font-size:19px;line-height:22px;color:#000;font-family:'Liberation Mono',monospace;letter-spacing:-0.4017px;-webkit-text-stroke:0.3px #000;">&amp; archivo,hidefloat valor)</div>
<div class="t" style="left:10.100000000000023px;top:387.63px;font-size:18.3px;line-height:21px;color:#333;font-family:'Liberation Mono',monospace;letter-spacing:-1.2816px;">22</div>
<div class="t" style="left:71.0px;top:386.94px;font-size:19px;line-height:22px;color:#000;font-family:'Liberation Mono',monospace;letter-spacing:-0.4017px;-webkit-text-stroke:0.3px #000;">{</div>
<div class="t" style="left:10.100000000000023px;top:409.63px;font-size:18.3px;line-height:21px;color:#333;font-family:'Liberation Mono',monospace;letter-spacing:-1.2816px;">23</div>
<div class="t" style="left:71.0px;top:408.94px;font-size:19px;line-height:22px;color:#000;font-family:'Liberation Mono',monospace;letter-spacing:-0.4017px;-webkit-text-stroke:0.3px #000;">  archivo.write((</div>
<div class="t" style="left:258.0px;top:408.94px;font-size:19px;line-height:22px;color:#2a62d8;font-family:'Liberation Mono',monospace;letter-spacing:-0.4017px;-webkit-text-stroke:0.3px #2a62d8;">char</div>
<div class="t" style="left:302.0px;top:408.94px;font-size:19px;line-height:22px;color:#000;font-family:'Liberation Mono',monospace;letter-spacing:-0.4017px;-webkit-text-stroke:0.3px #000;"> *)&amp;valor.</div>
<div class="t" style="left:412.0px;top:408.94px;font-size:19px;line-height:22px;color:#c23bb5;font-family:'Liberation Mono',monospace;letter-spacing:-0.4017px;-webkit-text-stroke:0.3px #c23bb5;">datos</div>
<div class="t" style="left:467.0px;top:408.94px;font-size:19px;line-height:22px;color:#000;font-family:'Liberation Mono',monospace;letter-spacing:-0.4017px;-webkit-text-stroke:0.3px #000;">,</div>
<div class="t" style="left:478.0px;top:408.94px;font-size:19px;line-height:22px;color:#2a62d8;font-family:'Liberation Mono',monospace;letter-spacing:-0.4017px;-webkit-text-stroke:0.3px #2a62d8;">sizeof</div>
<div class="t" style="left:544.0px;top:408.94px;font-size:19px;line-height:22px;color:#000;font-family:'Liberation Mono',monospace;letter-spacing:-0.4017px;-webkit-text-stroke:0.3px #000;">(</div>
<div class="t" style="left:555.0px;top:408.94px;font-size:19px;line-height:22px;color:#2a62d8;font-family:'Liberation Mono',monospace;letter-spacing:-0.4017px;-webkit-text-stroke:0.3px #2a62d8;">float</div>
<div class="t" style="left:610.0px;top:408.94px;font-size:19px;line-height:22px;color:#000;font-family:'Liberation Mono',monospace;letter-spacing:-0.4017px;-webkit-text-stroke:0.3px #000;">));</div>
<div class="t" style="left:10.100000000000023px;top:431.63px;font-size:18.3px;line-height:21px;color:#333;font-family:'Liberation Mono',monospace;letter-spacing:-1.2816px;">24</div>
<div class="t" style="left:93.0px;top:430.94px;font-size:19px;line-height:22px;color:#2a62d8;font-family:'Liberation Mono',monospace;letter-spacing:-0.4017px;-webkit-text-stroke:0.3px #2a62d8;">return</div>
<div class="t" style="left:159.0px;top:430.94px;font-size:19px;line-height:22px;color:#000;font-family:'Liberation Mono',monospace;letter-spacing:-0.4017px;-webkit-text-stroke:0.3px #000;">(archivo);</div>
<div class="a" style="left:52px;top:0px;width:1px;height:1px;background:#8a8a8a"></div>
<div class="a" style="left:52px;top:1px;width:7px;height:1px;background:#8a8a8a"></div>
<svg class="a" style="left:46px;top:39px;" width="14" height="13" viewBox="0 0 14 13"><rect x="0.5" y="0.5" width="12" height="12" fill="#fff" stroke="#8a8a8a"/><path d="M3 6.5 h7" stroke="#808080" stroke-width="1"/></svg>
<div class="a" style="left:52px;top:52px;width:1px;height:148px;background:#8a8a8a"></div>
<div class="a" style="left:52px;top:155px;width:7px;height:1px;background:#8a8a8a"></div>
<div class="a" style="left:52px;top:199px;width:7px;height:1px;background:#8a8a8a"></div>
<svg class="a" style="left:46px;top:215px;" width="14" height="13" viewBox="0 0 14 13"><rect x="0.5" y="0.5" width="12" height="12" fill="#fff" stroke="#8a8a8a"/><path d="M3 6.5 h7" stroke="#808080" stroke-width="1"/></svg>
<div class="a" style="left:52px;top:228px;width:1px;height:16px;background:#8a8a8a"></div>
<div class="a" style="left:52px;top:243px;width:7px;height:1px;background:#8a8a8a"></div>
<svg class="a" style="left:46px;top:325px;" width="14" height="13" viewBox="0 0 14 13"><rect x="0.5" y="0.5" width="12" height="12" fill="#fff" stroke="#8a8a8a"/><path d="M3 6.5 h7" stroke="#808080" stroke-width="1"/></svg>
<svg class="a" style="left:46px;top:391px;" width="14" height="13" viewBox="0 0 14 13"><rect x="0.5" y="0.5" width="12" height="12" fill="#fff" stroke="#8a8a8a"/><path d="M3 6.5 h7" stroke="#808080" stroke-width="1"/></svg>
<div class="a" style="left:52px;top:404px;width:1px;height:47px;background:#8a8a8a"></div>
<div class="a" style="left:71px;top:0px;width:1px;height:11px;background:repeating-linear-gradient(#b0b0b0 0 1px,transparent 1px 2px)"></div>
<div class="a" style="left:71px;top:56px;width:1px;height:110px;background:repeating-linear-gradient(#b0b0b0 0 1px,transparent 1px 2px)"></div>
<div class="a" style="left:71px;top:408px;width:1px;height:43px;background:repeating-linear-gradient(#b0b0b0 0 1px,transparent 1px 2px)"></div>
</div>
<div class="a" style="left:583px;top:690px;width:1333px;height:1px;background:#c2c2c2"></div>
<div class="a" style="left:583px;top:691px;width:1333px;height:20px;background:#f2f2f2;border-left:1px solid #c2c2c2;border-right:1px solid #c2c2c2"></div>
<div class="a" style="left:583px;top:711px;width:1333px;height:1px;background:#c2c2c2"></div>
<svg class="a" style="left:594px;top:694px;" width="17" height="17" viewBox="0 0 17 17"><path d="M2.5 0.5 L11.5 0.5 L15.5 4.5 L15.5 15.5 L2.5 15.5 Z" fill="#f6f8fb" stroke="#64768a" stroke-width="1"/>
<path d="M11.5 0.5 L11.5 4.5 L15.5 4.5" fill="#dfe6ee" stroke="#64768a" stroke-width="0.8"/>
<path d="M5 10 h8 M5 12 h8 M7 14 h5" stroke="#b4c0cc" stroke-width="0.8"/>
<rect x="0" y="2.2" width="9.5" height="7" fill="#e07d10"/>
<path d="M4.2 3.9 Q3.6 3.5 2.8 3.5 Q1.3 3.6 1.3 5.7 Q1.3 7.9 2.8 7.9 Q3.6 7.9 4.2 7.5 M8.4 3.9 Q7.8 3.5 7 3.5 Q5.5 3.6 5.5 5.7 Q5.5 7.9 7 7.9 Q7.8 7.9 8.4 7.5" stroke="#fff" stroke-width="1.2" fill="none"/></svg>
<svg class="a" style="left:619px;top:694px;" width="10" height="16" viewBox="0 0 10 16"><path d="M2 1.5 L8 8 L2 14.5" stroke="#b4b4b4" stroke-width="2.6" fill="none"/><path d="M2 1.5 L8 8 L2 14.5" stroke="#f4f4f4" stroke-width="0.9" fill="none"/></svg>
<svg class="a" style="left:641px;top:695px;" width="17" height="15" viewBox="0 0 17 15"><path d="M3.5 6 L6.5 8 M9.5 8 L12.5 6" stroke="#6a7a8a" stroke-width="0.8"/>
<rect x="0.6" y="0.5" width="3.3" height="10" fill="url(#sb1)" stroke="#4a72a0" stroke-width="0.9"/>
<rect x="6.5" y="3.2" width="3.3" height="10.2" fill="url(#sb2)" stroke="#9a6010" stroke-width="0.9"/>
<rect x="12.4" y="0.5" width="3.3" height="10" fill="url(#sb3)" stroke="#2a8a1a" stroke-width="0.9"/></svg>
<div class="t" style="left:662.5px;top:692.76px;font-size:18px;line-height:20px;color:#000;font-family:'Liberation Sans',sans-serif;">hidefloat</div>
<svg class="a" style="left:739px;top:694px;" width="10" height="16" viewBox="0 0 10 16"><path d="M2 1.5 L8 8 L2 14.5" stroke="#b4b4b4" stroke-width="2.6" fill="none"/><path d="M2 1.5 L8 8 L2 14.5" stroke="#f4f4f4" stroke-width="0.9" fill="none"/></svg>
<svg class="a" style="left:1899px;top:696px;" width="12" height="11" viewBox="0 0 12 11"><path d="M1 1 L11 10.5 M11 1 L1 10.5" stroke="#444" stroke-width="1.3"/></svg>
<div class="a" style="left:583px;top:717px;width:1333px;height:37px;background:#bdc7d1"></div>
<div class="a" style="left:676px;top:753px;width:1240px;height:1px;background:#c2c2c2"></div>
<div class="a" style="left:583px;top:717px;width:93px;height:37px;background:#f2f2f2;border-left:1px solid #c2c2c2"></div>
<div class="a" style="left:583px;top:717px;width:93px;height:4px;background:#3d7fcb"></div>
<div class="t" style="left:591.7px;top:724.76px;font-size:18px;line-height:20px;color:#000;font-family:'Liberation Sans',sans-serif;">Output</div>
<svg class="a" style="left:657px;top:732px;" width="11" height="10" viewBox="0 0 11 10"><path d="M0.5 0.5 L9.5 8.5 M9.5 0.5 L0.5 8.5" stroke="#555" stroke-width="1.3"/></svg>
<div class="a" style="left:1894px;top:739px;width:14px;height:1.2px;background:#666"></div>
<div class="a" style="left:583px;top:754px;width:1333px;height:250px;background:#f2f2f2;border-left:1px solid #c2c2c2;border-right:1px solid #c2c2c2;border-bottom:1px solid #c2c2c2"></div>
<div class="a" style="left:591px;top:760px;width:14px;height:14px;background:#d9bcbc;border:1px solid #bfa0a0"></div>
<div class="a" style="left:595.5px;top:764.5px;width:5px;height:5px;background:#cfcfcf"></div>
<svg class="a" style="left:589px;top:784px;" width="17" height="17" viewBox="0 0 17 17"><defs><linearGradient id="ff" x1="0" y1="0" x2="1" y2="1"><stop offset="0" stop-color="#e4f7c8"/><stop offset="1" stop-color="#78c23a"/></linearGradient></defs>
<path d="M1 1 L8.5 7.8 L1 14.5 Z" fill="url(#ff)" stroke="#1a8a1a" stroke-width="1.1" stroke-linejoin="round"/>
<path d="M7.5 1 L15 7.8 L7.5 14.5 Z" fill="url(#ff)" stroke="#1a8a1a" stroke-width="1.1" stroke-linejoin="round"/></svg>
<svg class="a" style="left:590px;top:811px;" width="17" height="17" viewBox="0 0 17 17"><rect x="0.5" y="0.5" width="15" height="15" rx="2" fill="#dcdcdc" stroke="#9a9a9a"/>
<rect x="2" y="2" width="12" height="12" fill="#1c1f1c"/>
<rect x="2" y="2" width="12" height="4" fill="#3a4a3a"/>
<path d="M3.5 6.5 l2.5 2 -2.5 2" stroke="#ddd" stroke-width="1" fill="none"/><path d="M7 11 h5" stroke="#ddd" stroke-width="1.2"/></svg>
<div class="t" style="left:627.5px;top:763.76px;font-size:18px;line-height:20px;color:#222;font-family:'Liberation Sans',sans-serif;letter-spacing:0.12px;">Creating pylsp environment</div>
<svg class="a" style="left:859px;top:769px;" width="11" height="10" viewBox="0 0 11 10"><path d="M0.5 0.5 L9.5 8.5 M9.5 0.5 L0.5 8.5" stroke="#666" stroke-width="1.3"/></svg>
<div class="t" style="left:902.8px;top:763.76px;font-size:18px;line-height:20px;color:#222;font-family:'Liberation Sans',sans-serif;letter-spacing:0.07px;">Installing pylsp dependencies</div>
<svg class="a" style="left:1148px;top:769px;" width="11" height="10" viewBox="0 0 11 10"><path d="M0.5 0.5 L9.5 8.5 M9.5 0.5 L0.5 8.5" stroke="#666" stroke-width="1.3"/></svg>
<div class="t" style="left:1191.3px;top:763.76px;font-size:18px;line-height:20px;color:#222;font-family:'Liberation Sans',sans-serif;letter-spacing:0.12px;">datos_salida (Build)</div>
<svg class="a" style="left:1357px;top:769px;" width="11" height="10" viewBox="0 0 11 10"><path d="M0.5 0.5 L9.5 8.5 M9.5 0.5 L0.5 8.5" stroke="#666" stroke-width="1.3"/></svg>
<div class="t" style="left:1400.6px;top:763.76px;font-size:18px;line-height:20px;color:#222;font-family:'Liberation Sans',sans-serif;letter-spacing:0.05px;">datos_salida (Debug)</div>
<svg class="a" style="left:1573px;top:769px;" width="11" height="10" viewBox="0 0 11 10"><path d="M0.5 0.5 L9.5 8.5 M9.5 0.5 L0.5 8.5" stroke="#666" stroke-width="1.3"/></svg>
<div class="a" style="left:1385px;top:788px;width:216px;height:4.5px;background:#3d7fcb"></div>
<div class="a" style="left:612px;top:792px;width:1304px;height:1px;background:#c9c9c9"></div>
<div class="a" style="left:612px;top:793px;width:1290px;height:210px;background:#fff"></div>
<div class="a" style="left:1902px;top:793px;width:13px;height:210px;background:#f2f2f2"></div>
<svg class="a" style="left:612px;top:794.8px;" width="11" height="18" viewBox="0 0 11 18"><polygon points="5.2,0.5 10,4 10,13.5 5.2,17 0.5,13.5 0.5,4" fill="#000"/><path d="M3.2 5.6 Q3.4 3 5.4 3 Q7.6 3 7.6 5.3 Q7.6 6.8 5.9 7.8 Q5.2 8.3 5.2 10.3" stroke="#fff" stroke-width="1.6" fill="none"/><rect x="4.3" y="12" width="1.8" height="1.9" fill="#fff"/></svg>
<div class="t" style="left:623px;top:793.74px;font-size:19px;line-height:22px;color:#000;font-family:'Liberation Mono',monospace;letter-spacing:-0.4px;-webkit-text-stroke:0.45px #000;">$</div>
<div class="a" style="left:635px;top:796.8px;width:9px;height:16px;border:1.2px solid #000"></div>
<div class="t" style="left:645px;top:793.74px;font-size:19px;line-height:22px;color:#000;font-family:'Liberation Mono',monospace;letter-spacing:-0.4px;-webkit-text-stroke:0.45px #000;">A</div>
<svg class="a" style="left:612px;top:816.8px;" width="11" height="18" viewBox="0 0 11 18"><polygon points="5.2,0.5 10,4 10,13.5 5.2,17 0.5,13.5 0.5,4" fill="#000"/><path d="M3.2 5.6 Q3.4 3 5.4 3 Q7.6 3 7.6 5.3 Q7.6 6.8 5.9 7.8 Q5.2 8.3 5.2 10.3" stroke="#fff" stroke-width="1.6" fill="none"/><rect x="4.3" y="12" width="1.8" height="1.9" fill="#fff"/></svg>
<div class="t" style="left:623px;top:815.74px;font-size:19px;line-height:22px;color:#000;font-family:'Liberation Mono',monospace;letter-spacing:-0.4px;-webkit-text-stroke:0.45px #000;">$</div>
<div class="t" style="left:634px;top:815.74px;font-size:19px;line-height:22px;color:#000;font-family:'Liberation Mono',monospace;letter-spacing:-0.4px;-webkit-text-stroke:0.45px #000;">I</div>
<div class="t" style="left:645px;top:815.74px;font-size:19px;line-height:22px;color:#000;font-family:'Liberation Mono',monospace;letter-spacing:-0.4px;-webkit-text-stroke:0.45px #000;">@</div>
<svg class="a" style="left:612px;top:838.8px;" width="11" height="18" viewBox="0 0 11 18"><polygon points="5.2,0.5 10,4 10,13.5 5.2,17 0.5,13.5 0.5,4" fill="#000"/><path d="M3.2 5.6 Q3.4 3 5.4 3 Q7.6 3 7.6 5.3 Q7.6 6.8 5.9 7.8 Q5.2 8.3 5.2 10.3" stroke="#fff" stroke-width="1.6" fill="none"/><rect x="4.3" y="12" width="1.8" height="1.9" fill="#fff"/></svg>
<div class="t" style="left:623px;top:837.74px;font-size:19px;line-height:22px;color:#000;font-family:'Liberation Mono',monospace;letter-spacing:-0.4px;-webkit-text-stroke:0.45px #000;">$</div>
<div class="a" style="left:635px;top:840.8px;width:9px;height:16px;border:1.2px solid #000"></div>
<div class="t" style="left:645px;top:837.74px;font-size:19px;line-height:22px;color:#000;font-family:'Liberation Mono',monospace;letter-spacing:-0.4px;-webkit-text-stroke:0.45px #000;">A</div>
<div class="a" style="left:612px;top:859px;width:11px;height:22px;background:#000"></div>
<div class="a" style="left:0px;top:1004px;width:1920px;height:30px;background:#f2f2f2"></div>
<svg class="a" style="left:1369px;top:1010px;" width="18" height="18" viewBox="0 0 18 18"><path d="M8.5 1.5 a7 6.2 0 1 1 -3 11.8 l-0.5 3.5 -2.5 -4.5 a7 6.2 0 0 1 6 -10.8z" fill="#fff" stroke="#c0302a" stroke-width="1.3"/>
<text x="6" y="11.5" font-size="8.5" font-family="Liberation Sans" fill="#c0302a">1</text></svg>
<div class="a" style="left:1390.2px;top:1009px;width:1.6px;height:21px;background:#d6d6d6"></div>
<div class="a" style="left:1585.5px;top:1009px;width:1.6px;height:21px;background:#d6d6d6"></div>
<div class="a" style="left:1624.1px;top:1009px;width:1.6px;height:21px;background:#d6d6d6"></div>
<div class="a" style="left:1770.0px;top:1009px;width:1.6px;height:21px;background:#d6d6d6"></div>
<div class="t" style="left:1471.4px;top:1010.26px;font-size:18px;line-height:20px;color:#222;font-family:'Liberation Sans',sans-serif;">20:1</div>
<div class="t" style="left:1591.4px;top:1010.26px;font-size:18px;line-height:20px;color:#222;font-family:'Liberation Sans',sans-serif;">INS</div>
<div class="a" style="left:1761px;top:1019px;width:2px;height:2px;background:#cacaca"></div>
<div class="a" style="left:1764px;top:1019px;width:2px;height:2px;background:#cacaca"></div>
<div class="a" style="left:1767px;top:1019px;width:2px;height:2px;background:#cacaca"></div>
<svg class="a" style="left:1780px;top:1011px;" width="14" height="14" viewBox="0 0 14 14"><path d="M6.8 0.5 c-3 0 -3 1.3 -3 2.5 v1.5 h3.2 v0.6 h-4.6 c-1.6 0 -2.4 1.3 -2.4 3.3 c0 2 0.8 3 2.2 3 h1.2 v-1.8 c0 -1.3 1 -2.3 2.3 -2.3 h3 c1.2 0 2 -0.9 2 -2 v-2.3 c0 -1.2 -1 -2.5 -3.9 -2.5z" fill="#3a76b0"/>
<path d="M7.2 13.5 c3 0 3 -1.3 3 -2.5 v-1.5 h-3.2 v-0.6 h4.6 c1.6 0 2.4 -1.3 2.4 -3.3 c0 -2 -0.8 -3 -2.2 -3 h-1.2 v1.8 c0 1.3 -1 2.3 -2.3 2.3 h-3 c-1.2 0 -2 0.9 -2 2 v2.3 c0 1.2 1 2.5 3.9 2.5z" fill="#f7c93a"/></svg>
<div class="t" style="left:1800.7px;top:1010.26px;font-size:18px;line-height:20px;color:#222;font-family:'Liberation Sans',sans-serif;letter-spacing:-0.1px;">Python 3.9.17</div>
<div class="a" style="left:0px;top:1034px;width:1920px;height:1px;background:#3c3c3c"></div>
<div class="a" style="left:0px;top:1035px;width:1920px;height:45px;background:linear-gradient(#f3f2f1,#ecebe9)"></div>
<div class="a" style="left:5.3px;top:1040px;width:29.4px;height:34.4px;background:#ededed;border:1px solid #cfcfcf;border-radius:4px"></div>
<svg class="a" style="left:12px;top:1050px;" width="16" height="15" viewBox="0 0 16 15"><rect x="6.5" y="1" width="7.5" height="6.5" fill="none" stroke="#2e3436" stroke-width="2"/><path d="M7.5 8.5 L3 8.5 L3 14 L8.5 14" fill="none" stroke="#2e3436" stroke-width="2"/><path d="M3.5 13.5 L6.5 10.5" stroke="#2e3436" stroke-width="1.5"/></svg>
<div class="a" style="left:39.7px;top:1038.3px;width:160px;height:38.5px;background:#ededed;border:1px solid #cdcdcd;border-radius:4px"></div>
<svg class="a" style="left:51.0px;top:1048px;" width="17" height="20" viewBox="0 0 17 20"><rect x="0.5" y="0.5" width="16" height="19" rx="2" fill="#3584e4"/><path d="M6 4 l2.5 -1.5 2.5 1.5 M6 10 l2.5 -1.5 2.5 1.5 M6 16 l2.5 -1.5 2.5 1.5" stroke="#cfe1f7" stroke-width="0.8" fill="none"/><path d="M1 7 h15 M1 13 h15" stroke="#2a6fc4" stroke-width="0.8"/></svg>
<div class="t" style="left:74.7px;top:1049.34px;font-size:17.2px;line-height:19px;color:#2e3436;font-family:'Liberation Sans',sans-serif;letter-spacing:0.05px;">cap3</div>
<div class="a" style="left:203.79999999999998px;top:1038.3px;width:160px;height:38.5px;background:#ededed;border:1px solid #cdcdcd;border-radius:4px"></div>
<svg class="a" style="left:211.1px;top:1046px;" width="24" height="24" viewBox="0 0 24 24"><rect x="0" y="0" width="24" height="24" fill="#fff"/><circle cx="12" cy="12" r="11" fill="#3b5fc8"/><path d="M2 12 Q8 8 13 12 Q17 15 22 11 L22 14 Q17 19 12 16 Q7 13 2 15 Z" fill="#9a64d6"/><path d="M6 20 Q12 17 14 10 Q15 6 18 5 Q17 9 19 10 Q17 18 8 21 Z" fill="#4fd6e6"/></svg>
<div class="t" style="left:238.79999999999998px;top:1049.34px;font-size:17.2px;line-height:19px;color:#2e3436;font-family:'Liberation Sans',sans-serif;letter-spacing:0.05px;">Capitulo 3 de...</div>
<div class="a" style="left:368.5px;top:1038.3px;width:160px;height:38.5px;background:#ededed;border:1px solid #cdcdcd;border-radius:4px"></div>
<svg class="a" style="left:375.8px;top:1046px;" width="24" height="24" viewBox="0 0 24 24"><rect x="0" y="0" width="24" height="24" fill="#fff"/><circle cx="12" cy="12" r="11" fill="#3b5fc8"/><path d="M2 12 Q8 8 13 12 Q17 15 22 11 L22 14 Q17 19 12 16 Q7 13 2 15 Z" fill="#9a64d6"/><path d="M6 20 Q12 17 14 10 Q15 6 18 5 Q17 9 19 10 Q17 18 8 21 Z" fill="#4fd6e6"/></svg>
<div class="t" style="left:403.5px;top:1049.34px;font-size:17.2px;line-height:19px;color:#2e3436;font-family:'Liberation Sans',sans-serif;letter-spacing:0.05px;">Capitulo 3 de...</div>
<div class="a" style="left:533.7px;top:1038.3px;width:160px;height:38.5px;background:#ededed;border:1px solid #cdcdcd;border-radius:4px"></div>
<svg class="a" style="left:543.0px;top:1049px;" width="20" height="20" viewBox="0 0 20 20"><rect x="0" y="0" width="19.5" height="17" rx="1" fill="#8a8a8a"/><rect x="0" y="17" width="19.5" height="1.5" fill="#cfcfcf"/><path d="M3 3 l2.5 1.8 -2.5 1.8 M6.5 6.5 h3" stroke="#eee" stroke-width="0.9" fill="none"/></svg>
<div class="t" style="left:569.0px;top:1049.34px;font-size:17.2px;line-height:19px;color:#8a8a8a;font-family:'Liberation Sans',sans-serif;letter-spacing:0.05px;">[msantos@a...</div>
<div class="a" style="left:697.9000000000001px;top:1038.3px;width:160px;height:38.5px;background:#ededed;border:1px solid #cdcdcd;border-radius:4px"></div>
<svg class="a" style="left:709.2px;top:1048px;" width="17" height="20" viewBox="0 0 17 20"><rect x="0.5" y="0.5" width="16" height="19" rx="2" fill="#3584e4"/><path d="M6 4 l2.5 -1.5 2.5 1.5 M6 10 l2.5 -1.5 2.5 1.5 M6 16 l2.5 -1.5 2.5 1.5" stroke="#cfe1f7" stroke-width="0.8" fill="none"/><path d="M1 7 h15 M1 13 h15" stroke="#2a6fc4" stroke-width="0.8"/></svg>
<div class="t" style="left:732.9000000000001px;top:1049.34px;font-size:17.2px;line-height:19px;color:#2e3436;font-family:'Liberation Sans',sans-serif;letter-spacing:0.05px;">c++cap3</div>
<div class="a" style="left:861.9000000000001px;top:1038.3px;width:160px;height:38.5px;background:#ededed;border:1px solid #cdcdcd;border-radius:4px"></div>
<svg class="a" style="left:870.7px;top:1047px;" width="20" height="22" viewBox="0 0 20 22"><path d="M4 1 h9 l3 3 v17 h-12z" fill="#f4f4f4" stroke="#d8d8d8" stroke-width="0.8"/><rect x="11" y="3.5" width="6.5" height="5.5" fill="#e24a4a"/><path d="M7 6 h4 M7 9 h8 M7 12 h8" stroke="#c8c8c8" stroke-width="0.8"/><path d="M0.5 15.5 h19" stroke="#4a78b8" stroke-width="1.3"/><circle cx="5" cy="17.5" r="2.5" fill="none" stroke="#4a78b8" stroke-width="1.3"/><circle cx="12" cy="17.5" r="2.5" fill="none" stroke="#4a78b8" stroke-width="1.3"/></svg>
<div class="t" style="left:896.9000000000001px;top:1049.34px;font-size:17.2px;line-height:19px;color:#2e3436;font-family:'Liberation Sans',sans-serif;letter-spacing:0.05px;">C++ - Aprend...</div>
<div class="a" style="left:1025.9px;top:1038.3px;width:160px;height:38.5px;background:#ededed;border:1px solid #cdcdcd;border-radius:4px"></div>
<svg class="a" style="left:1034.7px;top:1047px;" width="20" height="22" viewBox="0 0 20 22"><path d="M4 1 h9 l3 3 v17 h-12z" fill="#f4f4f4" stroke="#d8d8d8" stroke-width="0.8"/><rect x="11" y="3.5" width="6.5" height="5.5" fill="#e24a4a"/><path d="M7 6 h4 M7 9 h8 M7 12 h8" stroke="#c8c8c8" stroke-width="0.8"/><path d="M0.5 15.5 h19" stroke="#4a78b8" stroke-width="1.3"/><circle cx="5" cy="17.5" r="2.5" fill="none" stroke="#4a78b8" stroke-width="1.3"/><circle cx="12" cy="17.5" r="2.5" fill="none" stroke="#4a78b8" stroke-width="1.3"/></svg>
<div class="t" style="left:1060.9px;top:1049.34px;font-size:17.2px;line-height:19px;color:#2e3436;font-family:'Liberation Sans',sans-serif;letter-spacing:0.05px;">c++cap3_pro...</div>
<div class="a" style="left:1189.9px;top:1038.3px;width:160px;height:38.5px;background:#ededed;border:1px solid #cdcdcd;border-radius:4px"></div>
<svg class="a" style="left:1197.2px;top:1046px;" width="24" height="24" viewBox="0 0 24 24"><rect x="1" y="1" width="11" height="11" fill="#c01818"/><rect x="12" y="1" width="11" height="11" fill="#22a822"/><rect x="1" y="12" width="11" height="11" fill="#d6d60e"/><rect x="12" y="12" width="11" height="11" fill="#4a18c8"/><path d="M1 1 l3 -0 M12 12" stroke="none"/></svg>
<div class="t" style="left:1224.9px;top:1049.34px;font-size:17.2px;line-height:19px;color:#2e3436;font-family:'Liberation Sans',sans-serif;letter-spacing:0.05px;">datos_salida....</div>
<div class="a" style="left:1353.7px;top:1038.3px;width:160px;height:38.5px;background:#ededed;border:1px solid #cdcdcd;border-radius:4px"></div>
<svg class="a" style="left:1361.0px;top:1046px;" width="24" height="24" viewBox="0 0 24 24"><rect x="1" y="1" width="11" height="11" fill="#c01818"/><rect x="12" y="1" width="11" height="11" fill="#22a822"/><rect x="1" y="12" width="11" height="11" fill="#d6d60e"/><rect x="12" y="12" width="11" height="11" fill="#4a18c8"/><path d="M1 1 l3 -0 M12 12" stroke="none"/></svg>
<div class="t" style="left:1388.7px;top:1049.34px;font-size:17.2px;line-height:19px;color:#2e3436;font-family:'Liberation Sans',sans-serif;letter-spacing:0.05px;">/home/msant...</div>
<div class="a" style="left:1517.4px;top:1038.3px;width:160px;height:38.5px;background:#cfcfcf;border:1px solid #c9c9c9;border-radius:4px"></div>
<svg class="a" style="left:1525.7px;top:1046px;" width="23" height="25" viewBox="0 0 23 25"><polygon points="11.5,1 22,7 22,18 11.5,24 1,18 1,7" fill="#e9f0e0"/>
<polygon points="11.5,1 22,7 18.5,9 8,3" fill="#94c72a"/><polygon points="1,7 8,3 11.5,5 4.5,9" fill="#94c72a"/>
<polygon points="1,7 4.5,9 4.5,16 1,18" fill="#c2183a"/><polygon points="1,18 4.5,16 11.5,20 11.5,24" fill="#ea2a5a"/>
<polygon points="22,7 18.5,9 18.5,16 22,18" fill="#1d6fd6"/><polygon points="22,18 18.5,16 11.5,20 11.5,24" fill="#2a8ff0"/>
<polygon points="4.5,9 11.5,5 18.5,9 11.5,13" fill="#f6f8f2"/><polygon points="11.5,13 18.5,9 18.5,16 11.5,20" fill="#d2dce8"/><polygon points="4.5,9 11.5,13 11.5,20 4.5,16" fill="#eef2f6"/></svg>
<div class="t" style="left:1552.4px;top:1049.34px;font-size:17.2px;line-height:19px;color:#333;font-family:'Liberation Sans',sans-serif;letter-spacing:0.05px;">datos_salida ...</div>
<div class="a" style="left:1683.8px;top:1042px;width:52px;height:31px;background:#efefef;border:1px solid #dedede;border-radius:2px"></div>
<div class="a" style="left:1741.2px;top:1040.5px;width:55.6px;height:34px;background:#f4f4f4;border:2px solid #505050;border-radius:4px"></div>
<div class="a" style="left:1802.2px;top:1042px;width:51.4px;height:31px;background:#d3d3d3;border-radius:2px"></div>
<div class="a" style="left:1861.2px;top:1042px;width:51.3px;height:31px;background:#efefef;border:1px solid #dedede;border-radius:2px"></div>
<div class="a" style="left:1879.3px;top:1055.7px;width:17.2px;height:4.6px;border:1px solid #c8c8c8"></div>
</body></html>
